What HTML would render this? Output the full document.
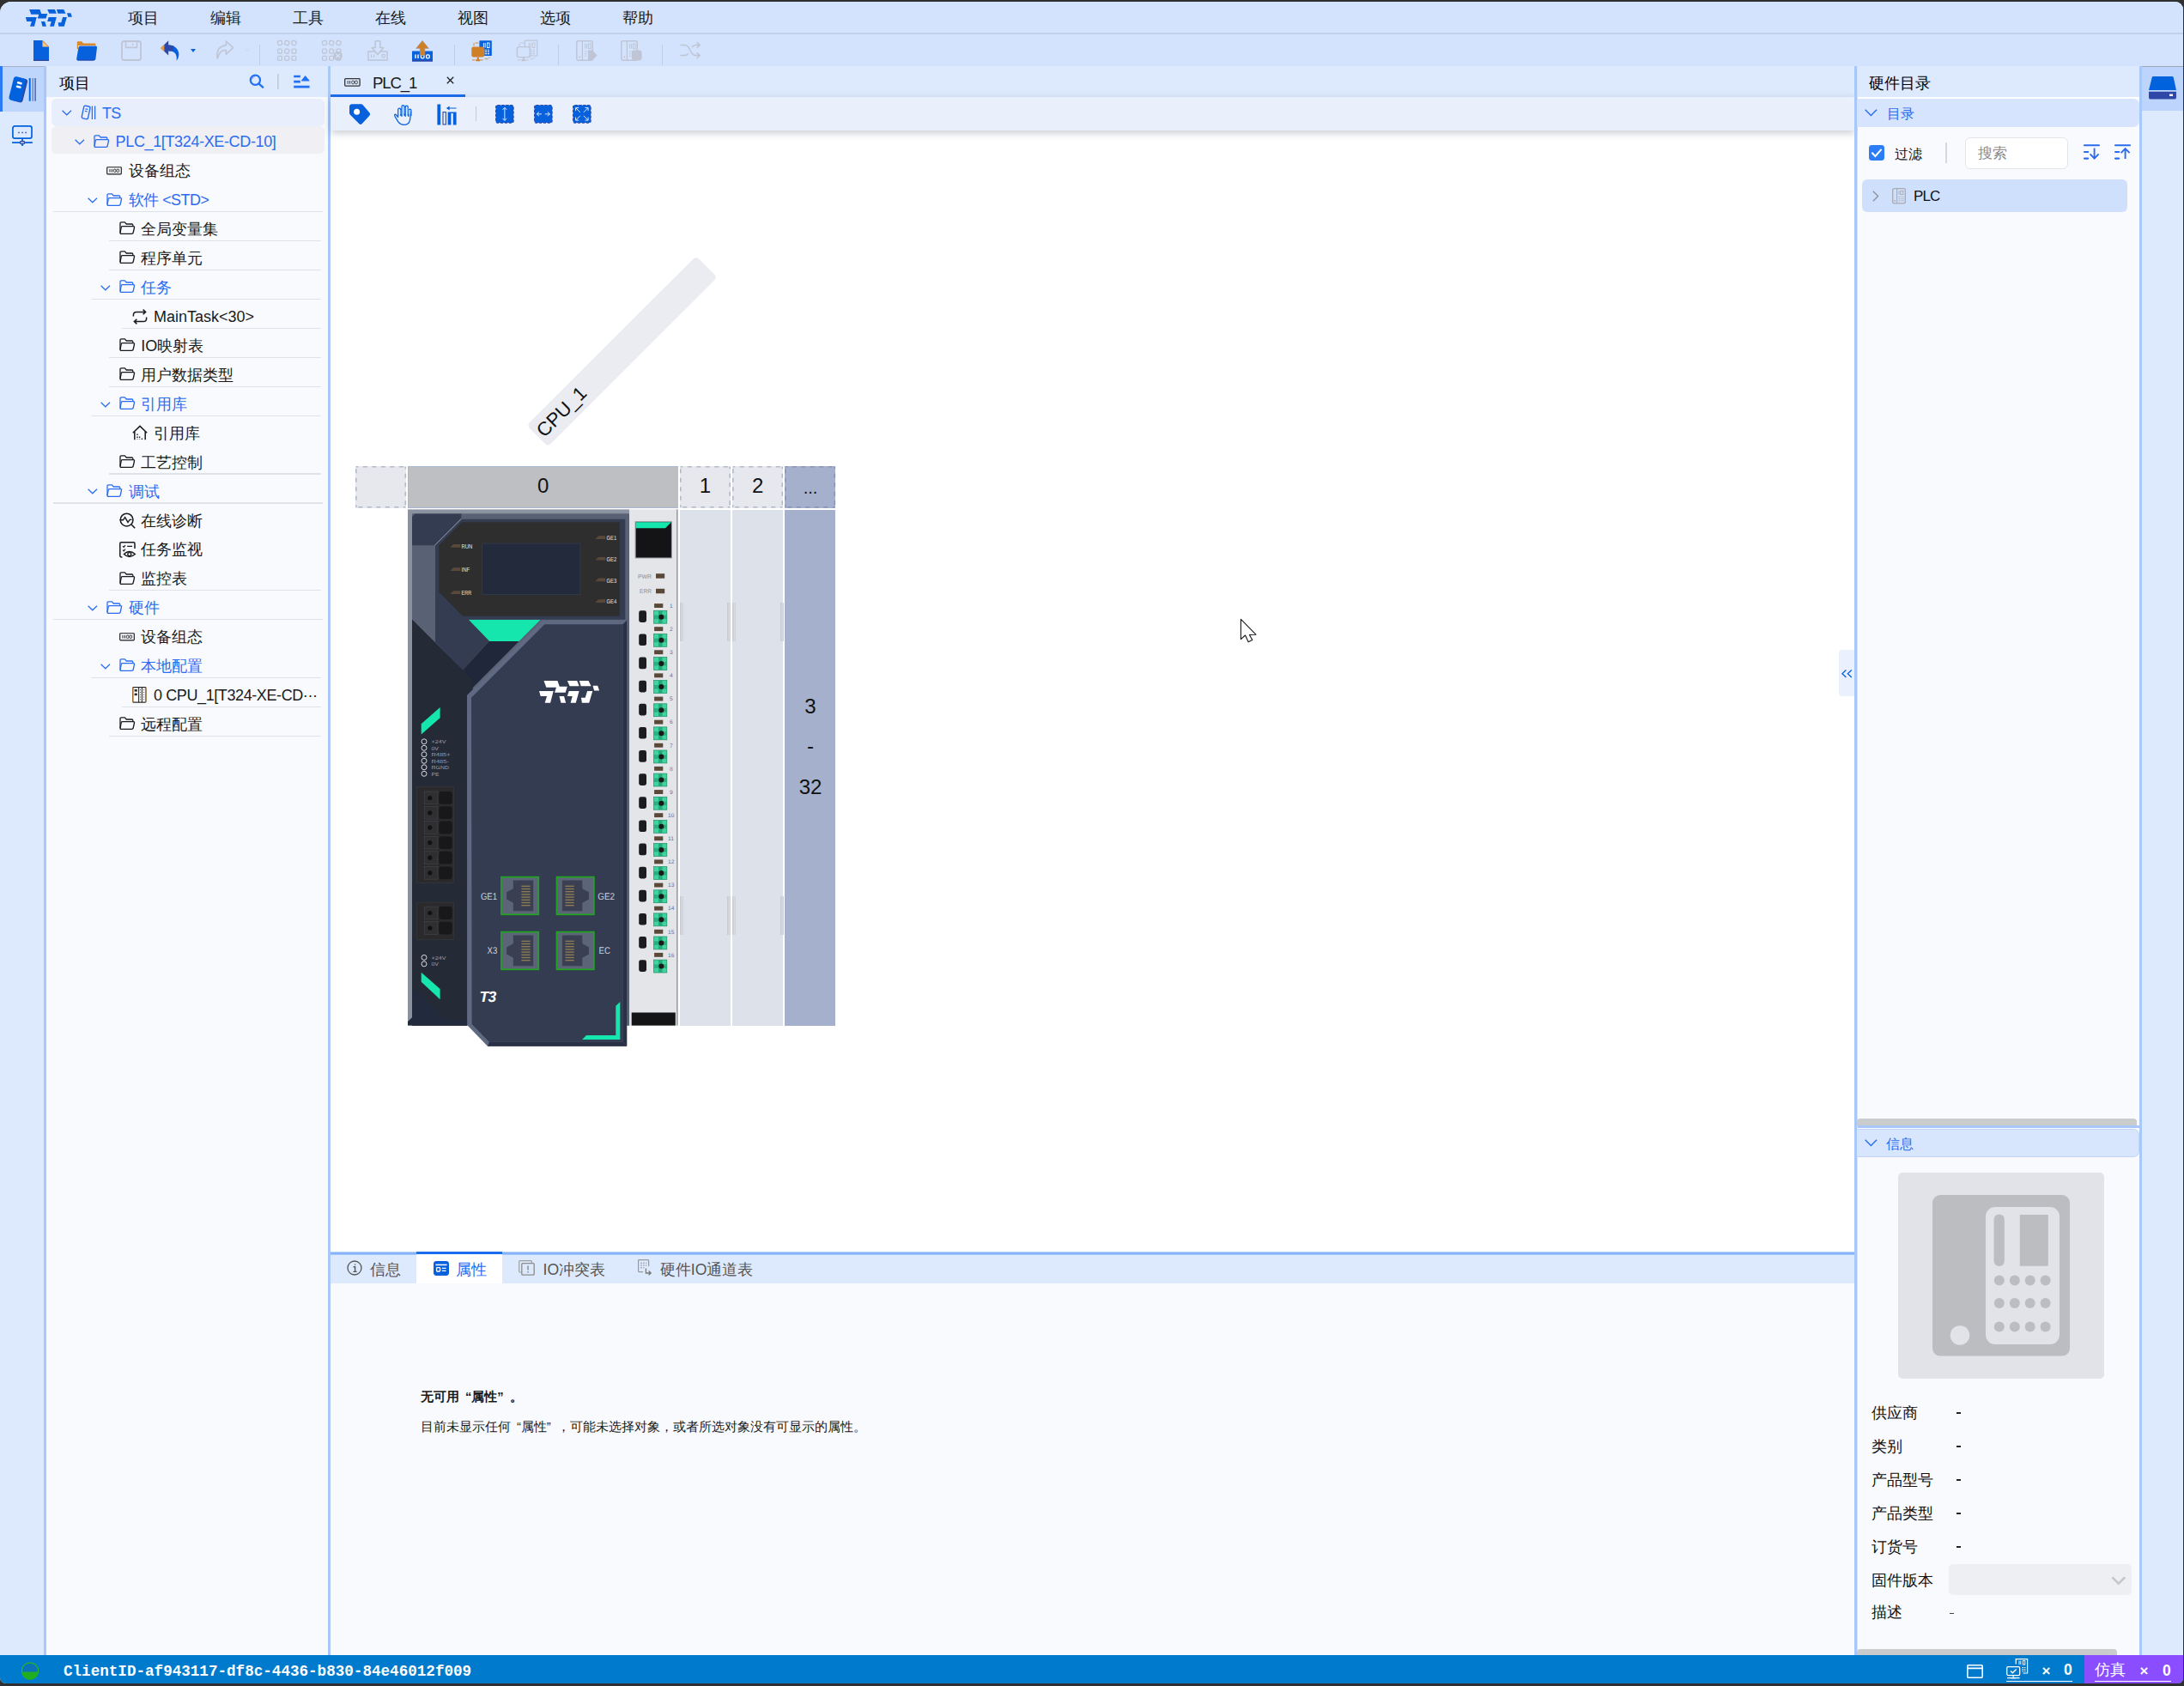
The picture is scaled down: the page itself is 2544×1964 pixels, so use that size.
<!DOCTYPE html>
<html lang="zh"><head><meta charset="utf-8"><title>PLC_1</title>
<style>
html,body{margin:0;padding:0}
body{width:2544px;height:1964px;position:relative;overflow:hidden;background:#303030;font-family:"Liberation Sans",sans-serif;}
#win{position:absolute;left:0;top:0;width:2544px;height:1964px;clip-path:inset(2px 1px 3px 0px round 13px 9px 6px 7px);background:#d3e3fd}
#win>div,#win>svg,.abs{position:absolute}
#win div{position:absolute;box-sizing:border-box}
#win svg{position:absolute;overflow:visible}
.t{white-space:nowrap}
</style></head>
<body><div id="win"><div style="left:0px;top:0px;width:2544px;height:39px;background:#d3e3fd"></div><div style="left:0px;top:38px;width:2544px;height:2px;background:#c2d0ea"></div><svg style="left:20px;top:4px;" width="80" height="34" viewBox="0 0 2184 928"><polygon points="385,190 720,190 770,330 960,330 915,480 650,480 690,350 445,350" fill="#0760dc"/><polygon points="270,440 620,440 545,730 410,730 460,570 305,570" fill="#0760dc"/><polygon points="765,570 880,570 925,730 805,730" fill="#0760dc"/><polygon points="960,190 1200,190 1250,320 1020,320" fill="#0760dc"/><polygon points="1255,190 1480,190 1545,320 1295,320" fill="#0760dc"/><polygon points="1585,310 1705,310 1745,430 1620,430" fill="#0760dc"/><polygon points="1000,440 1250,440 1170,730 1040,730 1085,570 960,570" fill="#0760dc"/><polygon points="1450,440 1580,440 1495,730 1320,730 1300,605 1400,605" fill="#0760dc"/></svg><div class="t" style="left:148.5px;top:10.4px;height:23px;line-height:23px;font-size:18px;color:#1a1a1a;">项目</div><div class="t" style="left:244.5px;top:10.4px;height:23px;line-height:23px;font-size:18px;color:#1a1a1a;">编辑</div><div class="t" style="left:340.5px;top:10.4px;height:23px;line-height:23px;font-size:18px;color:#1a1a1a;">工具</div><div class="t" style="left:436.5px;top:10.4px;height:23px;line-height:23px;font-size:18px;color:#1a1a1a;">在线</div><div class="t" style="left:532.5px;top:10.4px;height:23px;line-height:23px;font-size:18px;color:#1a1a1a;">视图</div><div class="t" style="left:628.5px;top:10.4px;height:23px;line-height:23px;font-size:18px;color:#1a1a1a;">选项</div><div class="t" style="left:724.5px;top:10.4px;height:23px;line-height:23px;font-size:18px;color:#1a1a1a;">帮助</div><div style="left:0px;top:40px;width:2544px;height:37px;background:#d3e3fd"></div><svg style="left:39px;top:47px;" width="18" height="24" viewBox="0 0 18 24"><path d="M0 0H10.5L18 7.5V24H0Z" fill="#0760dc"/><path d="M0 22.6H18V24H0Z" fill="#2f48a8"/><path d="M10.5 0L18 7.5H10.5Z" fill="#f6c98f"/><path d="M10.5 0L18 7.5H17L10.5 1.2Z" fill="#d9892b"/></svg><svg style="left:89px;top:48px;" width="24" height="23" viewBox="0 0 24 23"><path d="M0.8 1.2Q0.8 0.3 1.8 0.3H6.2L8.2 2.6H21.6Q22.4 2.6 22.4 3.4V9H0.8Z" fill="#d9892b"/><path d="M2 5H22V9H2Z" fill="#fff"/><path d="M2.6 6.6Q3 5.6 4.2 5.6H22.2Q24.3 5.6 24 7.6L22.4 20.4Q22.1 22.4 20 22.4H2Q-0.2 22.4 0.2 20.2Z" fill="#0760dc"/><path d="M0.3 20.6Q0.6 22.4 2 22.4H20Q22 22.4 22.3 20.6Q21.6 21.4 20 21.4H2.4Q1 21.4 0.3 20.6Z" fill="#2f48a8"/></svg><svg style="left:141px;top:47px;" width="24" height="24" viewBox="0 0 24 24"><rect x="1" y="1" width="22" height="22" rx="2.5" fill="none" stroke="#bfc5d4" stroke-width="1.8"/><path d="M5.5 1.2V8.4H18.5V1.2" fill="none" stroke="#bfc5d4" stroke-width="1.6"/><path d="M13.6 3.4V6" stroke="#bfc5d4" stroke-width="1.4"/></svg><svg style="left:187px;top:47px;" width="22" height="24" viewBox="0 0 22 24"><path d="M9 5.5Q19.5 5.5 21.3 15Q21.8 20 18.5 23.8Q19.5 18 16.5 14.6Q13.5 12 9 12.3Z" fill="#0760dc"/><path d="M9.2 0.3V17.6L0.3 9Z" fill="#2f48a8"/><path d="M9.2 5.2V12.4L14.6 12.6L15.4 6.4Z" fill="#2f48a8"/><path d="M0.3 9L4.4 5V13Z" fill="#e69b3c"/></svg><svg style="left:222px;top:57px;" width="6" height="4" viewBox="0 0 6 4"><path d="M0 0H6L3 4Z" fill="#0760dc"/></svg><svg style="left:251px;top:47px;" width="22" height="24" viewBox="0 0 22 24"><path d="M12.4 1L20.6 8.6L12.4 16.2V11.6Q4.6 11 2.4 21Q-0.4 8 12.4 5.6Z" fill="none" stroke="#bfc5d4" stroke-width="1.6" stroke-linejoin="round"/></svg><svg style="left:285px;top:57px;" width="6" height="4" viewBox="0 0 6 4"><path d="M0 0H6L3 4Z" fill="#cfdcf5"/></svg><div style="left:302px;top:52px;width:1.3px;height:24px;background:#c0cde8"></div><div style="left:528.5px;top:52px;width:1.3px;height:24px;background:#c0cde8"></div><div style="left:650px;top:52px;width:1.3px;height:24px;background:#c0cde8"></div><div style="left:771px;top:52px;width:1.3px;height:24px;background:#c0cde8"></div><svg style="left:323px;top:47px;" width="24" height="24" viewBox="0 0 24 24"><rect x="0.6" y="0.6" width="4.8" height="4.8" rx="1" transform="rotate(-12 3.0 3.0000000000000004)" fill="none" stroke="#bfc5d4" stroke-width="1.3"/><rect x="8.8" y="0.6" width="4.8" height="4.8" rx="1" transform="rotate(18 11.2 3.0000000000000004)" fill="none" stroke="#bfc5d4" stroke-width="1.3"/><rect x="17.0" y="0.6" width="4.8" height="4.8" rx="1" transform="rotate(20 19.4 3.0000000000000004)" fill="none" stroke="#bfc5d4" stroke-width="1.3"/><rect x="0.6" y="10.2" width="4.8" height="4.8" rx="1" fill="none" stroke="#bfc5d4" stroke-width="1.3"/><rect x="8.8" y="10.2" width="4.8" height="4.8" rx="1" transform="rotate(15 11.2 12.6)" fill="none" stroke="#bfc5d4" stroke-width="1.3"/><rect x="17.0" y="10.2" width="4.8" height="4.8" rx="1" fill="none" stroke="#bfc5d4" stroke-width="1.3"/><rect x="0.6" y="18.4" width="4.8" height="4.8" rx="1" fill="none" stroke="#bfc5d4" stroke-width="1.3"/><rect x="8.8" y="18.4" width="4.8" height="4.8" rx="1" fill="none" stroke="#bfc5d4" stroke-width="1.3"/><rect x="17.0" y="18.4" width="4.8" height="4.8" rx="1" fill="none" stroke="#bfc5d4" stroke-width="1.3"/></svg><svg style="left:375px;top:47px;" width="24" height="24" viewBox="0 0 24 24"><rect x="0.6" y="0.6" width="4.8" height="4.8" rx="1" transform="rotate(-12 3.0 3.0000000000000004)" fill="none" stroke="#bfc5d4" stroke-width="1.3"/><rect x="8.8" y="0.6" width="4.8" height="4.8" rx="1" transform="rotate(18 11.2 3.0000000000000004)" fill="none" stroke="#bfc5d4" stroke-width="1.3"/><rect x="17.0" y="0.6" width="4.8" height="4.8" rx="1" transform="rotate(20 19.4 3.0000000000000004)" fill="none" stroke="#bfc5d4" stroke-width="1.3"/><rect x="0.6" y="10.2" width="4.8" height="4.8" rx="1" fill="none" stroke="#bfc5d4" stroke-width="1.3"/><rect x="8.8" y="10.2" width="4.8" height="4.8" rx="1" transform="rotate(15 11.2 12.6)" fill="none" stroke="#bfc5d4" stroke-width="1.3"/><rect x="17.0" y="10.2" width="4.8" height="4.8" rx="1" fill="none" stroke="#bfc5d4" stroke-width="1.3"/><rect x="0.6" y="18.4" width="4.8" height="4.8" rx="1" fill="none" stroke="#bfc5d4" stroke-width="1.3"/><rect x="8.8" y="18.4" width="4.8" height="4.8" rx="1" fill="none" stroke="#bfc5d4" stroke-width="1.3"/><rect x="17.0" y="18.4" width="4.8" height="4.8" rx="1" fill="none" stroke="#bfc5d4" stroke-width="1.3"/><circle cx="18.6" cy="18" r="5.2" fill="#bfc5d4"/><path d="M16.2 15.6L21 20.4M21 15.6L16.2 20.4" stroke="#d3e3fd" stroke-width="1.3"/></svg><svg style="left:428px;top:47px;" width="24" height="24" viewBox="0 0 24 24"><path d="M1 13H23V23H1Z" fill="none" stroke="#bfc5d4" stroke-width="1.5"/><path d="M9.2 0.8H14.8V8.6H18.8L12 16.4L5.2 8.6H9.2Z" fill="#d3e3fd" stroke="#bfc5d4" stroke-width="1.5" stroke-linejoin="round"/><path d="M4.6 16.4V20M7.6 16.4V20" stroke="#bfc5d4" stroke-width="1.3"/><rect x="17" y="16.4" width="3.4" height="3.6" rx="1.2" fill="none" stroke="#bfc5d4" stroke-width="1.2"/></svg><svg style="left:480px;top:46.6px;" width="24" height="25" viewBox="0 0 24 25"><path d="M0 12.6H24V24.4H0Z" fill="#0760dc"/><path d="M0 22.8H24V24.4H0Z" fill="#2f48a8"/><path d="M4 16.6V21M7 16.6V21" stroke="#fff" stroke-width="1.4"/><rect x="10.4" y="16.8" width="3.6" height="4" rx="1.3" fill="none" stroke="#fff" stroke-width="1.3"/><rect x="16.6" y="16.8" width="3.6" height="4" rx="1.3" fill="none" stroke="#fff" stroke-width="1.3"/><path d="M12 0.3L19.6 9.4H14.9V17.6H9.1V9.4H4.4Z" fill="#cf7f26" stroke="#9aa0b4" stroke-width="0.5"/></svg><svg style="left:549px;top:47px;" width="24" height="24" viewBox="0 0 24 24"><rect x="9.4" y="0.2" width="14.4" height="17.8" rx="0.6" fill="#0760dc"/><path d="M14.4 3V8.6M16.2 3V8.6" stroke="#fff" stroke-width="0.9"/><rect x="18.4" y="3" width="2.6" height="5.6" fill="none" stroke="#fff" stroke-width="0.9"/><path d="M13.6 11.2H21.4M13.6 13.4H21.4M13.6 15.6H21.4" stroke="#fff" stroke-width="1.1" stroke-dasharray="1.8 0.9"/><path d="M8.6 3H4.2Q3 3 3 4.2V6.6" fill="none" stroke="#cf7f26" stroke-width="1.5" stroke-dasharray="4 1" opacity="0.6"/><path d="M15.6 21.4H19.4Q20.8 21.4 20.8 19.6" fill="none" stroke="#cf7f26" stroke-width="1.5" stroke-dasharray="4 1" opacity="0.6"/><rect x="0.3" y="7.6" width="15" height="12" rx="2.4" fill="#cf7f26" stroke="#cf7f26" stroke-width="0"/><path d="M7.8 19.6V23.2M5.4 23.2H10.2" stroke="#cf7f26" stroke-width="2"/><path d="M1 22.9H14.6" stroke="#cf7f26" stroke-width="0.9" stroke-dasharray="3.4 1.2"/></svg><svg style="left:602px;top:47px;" width="24" height="24" viewBox="0 0 24 24"><rect x="9.4" y="0.2" width="14.4" height="17.8" rx="0.6" fill="none" stroke="#bfc5d4" stroke-width="1.2"/><path d="M14.4 3V8.6M16.2 3V8.6" stroke="#bfc5d4" stroke-width="0.9"/><rect x="18.4" y="3" width="2.6" height="5.6" fill="none" stroke="#bfc5d4" stroke-width="0.9"/><path d="M13.6 11.2H21.4M13.6 13.4H21.4M13.6 15.6H21.4" stroke="#bfc5d4" stroke-width="1.1" stroke-dasharray="1.8 0.9"/><path d="M8.6 3H4.2Q3 3 3 4.2V6.6" fill="none" stroke="#bfc5d4" stroke-width="1.5" stroke-dasharray="4 1" opacity="0.6"/><path d="M15.6 21.4H19.4Q20.8 21.4 20.8 19.6" fill="none" stroke="#bfc5d4" stroke-width="1.5" stroke-dasharray="4 1" opacity="0.6"/><rect x="0.3" y="7.6" width="15" height="12" rx="2.4" fill="#d3e3fd" stroke="#bfc5d4" stroke-width="1.4"/><path d="M7.8 19.6V23.2M5.4 23.2H10.2" stroke="#bfc5d4" stroke-width="2"/><path d="M1 22.9H14.6" stroke="#bfc5d4" stroke-width="0.9" stroke-dasharray="3.4 1.2"/></svg><svg style="left:671px;top:47px;" width="25" height="24" viewBox="0 0 25 24"><rect x="0.8" y="0.8" width="18.4" height="22.4" rx="1.4" fill="none" stroke="#bfc5d4" stroke-width="1.5"/><path d="M7.4 1V23" stroke="#bfc5d4" stroke-width="1.3"/><path d="M10.6 4V9.6M12.6 4V9.6" stroke="#bfc5d4" stroke-width="1"/><rect x="14.6" y="4" width="2.4" height="5.6" fill="none" stroke="#bfc5d4" stroke-width="1"/><path d="M10 13H17M10 15.6H13M10 18.2H13" stroke="#bfc5d4" stroke-width="1.1" stroke-dasharray="1.6 0.9"/><circle cx="4.2" cy="19.4" r="1" fill="#bfc5d4"/><path d="M14 11.6H19L24.6 17.6L19 23.6H14Z" fill="#bfc5d4"/></svg><svg style="left:723px;top:47px;" width="25" height="24" viewBox="0 0 25 24"><rect x="0.8" y="0.8" width="18.4" height="22.4" rx="1.4" fill="none" stroke="#bfc5d4" stroke-width="1.5"/><path d="M7.4 1V23" stroke="#bfc5d4" stroke-width="1.3"/><path d="M10.6 4V9.6M12.6 4V9.6" stroke="#bfc5d4" stroke-width="1"/><rect x="14.6" y="4" width="2.4" height="5.6" fill="none" stroke="#bfc5d4" stroke-width="1"/><path d="M10 13H17M10 15.6H13M10 18.2H13" stroke="#bfc5d4" stroke-width="1.1" stroke-dasharray="1.6 0.9"/><circle cx="4.2" cy="19.4" r="1" fill="#bfc5d4"/><rect x="13" y="11.6" width="11.6" height="12" rx="3" fill="#bfc5d4"/></svg><svg style="left:792px;top:48px;" width="24" height="22" viewBox="0 0 24 22"><path d="M0.5 4.6H5.6Q8.4 4.6 10 7L14 14Q15.6 16.6 18.4 16.6H23M0.5 16.6H5.6Q8.4 16.6 10 14.2M14 7Q15.6 4.6 18.4 4.6H23M19.6 1.2L23.2 4.6L19.6 8M19.6 13.2L23.2 16.6L19.6 20" fill="none" stroke="#bfc5d4" stroke-width="1.5"/></svg><div style="left:0px;top:77px;width:51px;height:1851px;background:#dde9fd"></div><div style="left:0px;top:77px;width:51px;height:52.6px;background:#bfd6fc"></div><div style="left:2.8px;top:77px;width:48.2px;height:1.2px;background:#a7afc4"></div><div style="left:0px;top:77px;width:2.8px;height:52.6px;background:#2b7bf7"></div><svg style="left:11px;top:87px;" width="33" height="34" viewBox="0 0 33 34"><g transform="rotate(14 9.5 17)"><rect x="3.6" y="3.2" width="15" height="28" rx="3" fill="#2f48a8"/><rect x="2" y="3" width="14.6" height="28" rx="3" fill="#0062dc"/><rect x="7" y="8.2" width="6" height="2.4" rx="1" fill="#fff"/><rect x="7" y="12.8" width="6" height="2.4" rx="1" fill="#fff"/></g><path d="M23.7 4V30.8" stroke="#0062dc" stroke-width="1.9"/><path d="M27.2 4V30.8" stroke="#6f8fc8" stroke-width="1.6"/><path d="M30.1 4V30.8" stroke="#3c5cb0" stroke-width="1.4"/></svg><svg style="left:14px;top:145.8px;" width="24" height="25" viewBox="0 0 24 25"><rect x="0.9" y="0.85" width="22.1" height="14.35" rx="2.4" fill="none" stroke="#0062dc" stroke-width="1.7"/><rect x="7.2" y="7.7" width="1.5" height="1.5" fill="#2f48a8"/><rect x="11.3" y="7.7" width="1.5" height="1.5" fill="#2f48a8"/><rect x="15.4" y="7.7" width="1.5" height="1.5" fill="#2f48a8"/><path d="M12 16V24.1M0.06 20.1H23.9" stroke="#0062dc" stroke-width="1.8"/><rect x="9.5" y="18.7" width="5" height="2.9" rx="0.8" fill="#aebfe0" stroke="#2f48a8" stroke-width="1.2"/></svg><div style="left:51px;top:77px;width:3px;height:1851px;background:#a8c7fa"></div><div style="left:2492px;top:77px;width:3px;height:1851px;background:#a8c7fa"></div><div style="left:2495px;top:77px;width:49px;height:1851px;background:#dde9fd"></div><div style="left:2495px;top:77px;width:49px;height:52px;background:#bdd4fc"></div><div style="left:2495px;top:77px;width:49px;height:1px;background:#9ea7b8"></div><svg style="left:2503px;top:89px;" width="32" height="27" viewBox="0 0 32 27"><path d="M5.2 0H27.2Q28.4 0 28.8 1.4L32 15.9H0L3.6 1.4Q4 0 5.2 0Z" fill="#0062dc"/><path d="M0 17.7H32V24.4Q32 26.6 29.8 26.6H2.2Q0 26.6 0 24.4Z" fill="#2f48a8"/><rect x="24" y="20.6" width="4" height="2.4" fill="#fff"/></svg><div style="left:54px;top:77px;width:328px;height:1851px;background:#f8fafd"></div><div style="left:54px;top:77px;width:328px;height:36px;background:#dde9fd"></div><div class="t" style="left:69px;top:85.9px;height:23px;line-height:23px;font-size:18px;color:#000;">项目</div><svg style="left:290px;top:85.6px;" width="18" height="17" viewBox="0 0 18 17"><circle cx="7.4" cy="7.3" r="5.6" fill="none" stroke="#2171f3" stroke-width="2.2"/><path d="M11.6 11.6L16.2 15.6" stroke="#2171f3" stroke-width="2.4" stroke-linecap="round"/><path d="M3.6 6.6Q4.2 3.8 7 3.4" fill="none" stroke="#5b3fd0" stroke-width="0.8" opacity="0.6"/></svg><div style="left:323.2px;top:86.2px;width:2.2px;height:17.6px;background:linear-gradient(90deg,#bcc4d4,#d3dae8)"></div><svg style="left:342px;top:87.3px;" width="19" height="16" viewBox="0 0 19 16"><path d="M0.2 2H7.9M0.2 8.1H7.9M0.2 14.1H18.6" stroke="#2171f3" stroke-width="2.6"/><path d="M13.6 1L18.3 6.4Q18.9 7.4 17.8 7.4H9.6Q8.5 7.4 9.1 6.4Z" fill="#2171f3"/></svg><div style="left:382.3px;top:77px;width:3px;height:1851px;background:#a8c7fa"></div><div style="left:60px;top:114.5px;width:318px;height:32px;background:#e8eefb;border-radius:6px"></div><svg style="left:72px;top:128.35px;" width="12" height="8" viewBox="0 0 12 8"><path d="M0.6 0.8L5.8 5.8L11 0.8" fill="none" stroke="#2a6cf0" stroke-width="1.2"/></svg><svg style="left:95px;top:122.15px;" width="17" height="18" viewBox="0 0 17 18"><g transform="rotate(12 5 9)"><rect x="1.4" y="1.4" width="7.4" height="15" rx="1.8" fill="none" stroke="#2a6cf0" stroke-width="1.4"/><path d="M3.6 5H6.6M3.6 7.6H6.6" stroke="#2a6cf0" stroke-width="1.2"/></g><path d="M12.4 1.6V17M15.6 1.6V17" stroke="#2a6cf0" stroke-width="1.3"/></svg><div class="t" style="left:119px;top:120.5px;height:23px;line-height:23px;font-size:18px;color:#2a6cf0;letter-spacing:-0.8px;">TS</div><div style="left:60px;top:147.4px;width:318px;height:32.1px;background:#efeff4;border-radius:6px"></div><svg style="left:87px;top:162.28px;" width="12" height="8" viewBox="0 0 12 8"><path d="M0.6 0.8L5.8 5.8L11 0.8" fill="none" stroke="#2a6cf0" stroke-width="1.2"/></svg><svg style="left:109px;top:156.68px;" width="18" height="16" viewBox="0 0 18 16"><path d="M1 13.2V2.2Q1 0.9 2.3 0.9H6.4L8.2 3H14.6Q15.8 3 15.8 4.2V5.6" fill="none" stroke="#2a6cf0" stroke-width="1.3" stroke-linejoin="round"/><path d="M3.4 5.7H16.4Q17.8 5.7 17.5 7L16.2 13Q15.9 14.3 14.5 14.3H2.2Q0.8 14.3 1.1 13L2.2 6.9Q2.4 5.7 3.4 5.7Z" fill="none" stroke="#2a6cf0" stroke-width="1.3" stroke-linejoin="round"/></svg><div class="t" style="left:134.6px;top:154.4px;height:23px;line-height:23px;font-size:18px;color:#2a6cf0;letter-spacing:-0.36px;">PLC_1[T324-XE-CD-10]</div><svg style="left:124px;top:193.81000000000003px;" width="18" height="10" viewBox="0 0 18 10"><rect x="0.7" y="0.7" width="16.6" height="8.2" rx="0.8" fill="none" stroke="#1a1a1a" stroke-width="1.15"/><path d="M4 3V6.6M6.4 3V6.6" stroke="#1a1a1a" stroke-width="1"/><rect x="8.4" y="3.1" width="2.6" height="3.4" rx="1" fill="none" stroke="#1a1a1a" stroke-width="0.9"/><rect x="12" y="3.1" width="2.6" height="3.4" rx="1" fill="none" stroke="#1a1a1a" stroke-width="0.9"/></svg><div class="t" style="left:150px;top:188.3px;height:23px;line-height:23px;font-size:18px;color:#1a1a1a;">设备组态</div><svg style="left:101.6px;top:230.14px;" width="12" height="8" viewBox="0 0 12 8"><path d="M0.6 0.8L5.8 5.8L11 0.8" fill="none" stroke="#2a6cf0" stroke-width="1.2"/></svg><svg style="left:124px;top:224.54px;" width="18" height="16" viewBox="0 0 18 16"><path d="M1 13.2V2.2Q1 0.9 2.3 0.9H6.4L8.2 3H14.6Q15.8 3 15.8 4.2V5.6" fill="none" stroke="#2a6cf0" stroke-width="1.3" stroke-linejoin="round"/><path d="M3.4 5.7H16.4Q17.8 5.7 17.5 7L16.2 13Q15.9 14.3 14.5 14.3H2.2Q0.8 14.3 1.1 13L2.2 6.9Q2.4 5.7 3.4 5.7Z" fill="none" stroke="#2a6cf0" stroke-width="1.3" stroke-linejoin="round"/></svg><div class="t" style="left:150px;top:222.2px;height:23px;line-height:23px;font-size:18px;color:#2a6cf0;letter-spacing:-0.6px;">软件 &lt;STD&gt;</div><div style="left:62px;top:246.09px;width:314px;height:1.2px;background:#dfe2e8"></div><svg style="left:138.6px;top:258.47px;" width="18" height="16" viewBox="0 0 18 16"><path d="M1 13.2V2.2Q1 0.9 2.3 0.9H6.4L8.2 3H14.6Q15.8 3 15.8 4.2V5.6" fill="none" stroke="#1a1a1a" stroke-width="1.3" stroke-linejoin="round"/><path d="M3.4 5.7H16.4Q17.8 5.7 17.5 7L16.2 13Q15.9 14.3 14.5 14.3H2.2Q0.8 14.3 1.1 13L2.2 6.9Q2.4 5.7 3.4 5.7Z" fill="none" stroke="#1a1a1a" stroke-width="1.3" stroke-linejoin="round"/></svg><div class="t" style="left:164.3px;top:256.2px;height:23px;line-height:23px;font-size:18px;color:#1a1a1a;">全局变量集</div><div style="left:127px;top:280.02000000000004px;width:246.60000000000002px;height:1.2px;background:#dfe2e8"></div><svg style="left:138.6px;top:292.4px;" width="18" height="16" viewBox="0 0 18 16"><path d="M1 13.2V2.2Q1 0.9 2.3 0.9H6.4L8.2 3H14.6Q15.8 3 15.8 4.2V5.6" fill="none" stroke="#1a1a1a" stroke-width="1.3" stroke-linejoin="round"/><path d="M3.4 5.7H16.4Q17.8 5.7 17.5 7L16.2 13Q15.9 14.3 14.5 14.3H2.2Q0.8 14.3 1.1 13L2.2 6.9Q2.4 5.7 3.4 5.7Z" fill="none" stroke="#1a1a1a" stroke-width="1.3" stroke-linejoin="round"/></svg><div class="t" style="left:164.3px;top:290.1px;height:23px;line-height:23px;font-size:18px;color:#1a1a1a;">程序单元</div><div style="left:127px;top:313.95px;width:246.60000000000002px;height:1.2px;background:#dfe2e8"></div><svg style="left:117px;top:331.93px;" width="12" height="8" viewBox="0 0 12 8"><path d="M0.6 0.8L5.8 5.8L11 0.8" fill="none" stroke="#2a6cf0" stroke-width="1.2"/></svg><svg style="left:138.6px;top:326.33px;" width="18" height="16" viewBox="0 0 18 16"><path d="M1 13.2V2.2Q1 0.9 2.3 0.9H6.4L8.2 3H14.6Q15.8 3 15.8 4.2V5.6" fill="none" stroke="#2a6cf0" stroke-width="1.3" stroke-linejoin="round"/><path d="M3.4 5.7H16.4Q17.8 5.7 17.5 7L16.2 13Q15.9 14.3 14.5 14.3H2.2Q0.8 14.3 1.1 13L2.2 6.9Q2.4 5.7 3.4 5.7Z" fill="none" stroke="#2a6cf0" stroke-width="1.3" stroke-linejoin="round"/></svg><div class="t" style="left:164.3px;top:324.0px;height:23px;line-height:23px;font-size:18px;color:#2a6cf0;">任务</div><div style="left:106px;top:347.88px;width:267.6px;height:1.2px;background:#dfe2e8"></div><svg style="left:154px;top:359.65999999999997px;" width="18" height="18" viewBox="0 0 18 18"><path d="M1.4 8.4V7Q1.4 3.4 5 3.4H15.4M12.6 0.6L15.6 3.4L12.6 6.2" fill="none" stroke="#1a1a1a" stroke-width="1.5"/><path d="M16.6 9.4V11Q16.6 14.6 13 14.6H2.6M5.4 11.8L2.4 14.6L5.4 17.4" fill="none" stroke="#1a1a1a" stroke-width="1.5"/></svg><div class="t" style="left:179px;top:358.0px;height:23px;line-height:23px;font-size:18px;color:#1a1a1a;">MainTask&lt;30&gt;</div><div style="left:142px;top:381.81px;width:231.60000000000002px;height:1.2px;background:#dfe2e8"></div><svg style="left:138.6px;top:394.19px;" width="18" height="16" viewBox="0 0 18 16"><path d="M1 13.2V2.2Q1 0.9 2.3 0.9H6.4L8.2 3H14.6Q15.8 3 15.8 4.2V5.6" fill="none" stroke="#1a1a1a" stroke-width="1.3" stroke-linejoin="round"/><path d="M3.4 5.7H16.4Q17.8 5.7 17.5 7L16.2 13Q15.9 14.3 14.5 14.3H2.2Q0.8 14.3 1.1 13L2.2 6.9Q2.4 5.7 3.4 5.7Z" fill="none" stroke="#1a1a1a" stroke-width="1.3" stroke-linejoin="round"/></svg><div class="t" style="left:164.3px;top:391.9px;height:23px;line-height:23px;font-size:18px;color:#1a1a1a;">IO映射表</div><div style="left:127px;top:415.74px;width:246.60000000000002px;height:1.2px;background:#dfe2e8"></div><svg style="left:138.6px;top:428.12px;" width="18" height="16" viewBox="0 0 18 16"><path d="M1 13.2V2.2Q1 0.9 2.3 0.9H6.4L8.2 3H14.6Q15.8 3 15.8 4.2V5.6" fill="none" stroke="#1a1a1a" stroke-width="1.3" stroke-linejoin="round"/><path d="M3.4 5.7H16.4Q17.8 5.7 17.5 7L16.2 13Q15.9 14.3 14.5 14.3H2.2Q0.8 14.3 1.1 13L2.2 6.9Q2.4 5.7 3.4 5.7Z" fill="none" stroke="#1a1a1a" stroke-width="1.3" stroke-linejoin="round"/></svg><div class="t" style="left:164.3px;top:425.8px;height:23px;line-height:23px;font-size:18px;color:#1a1a1a;">用户数据类型</div><div style="left:127px;top:449.67px;width:246.60000000000002px;height:1.2px;background:#dfe2e8"></div><svg style="left:117px;top:467.65000000000003px;" width="12" height="8" viewBox="0 0 12 8"><path d="M0.6 0.8L5.8 5.8L11 0.8" fill="none" stroke="#2a6cf0" stroke-width="1.2"/></svg><svg style="left:138.6px;top:462.05px;" width="18" height="16" viewBox="0 0 18 16"><path d="M1 13.2V2.2Q1 0.9 2.3 0.9H6.4L8.2 3H14.6Q15.8 3 15.8 4.2V5.6" fill="none" stroke="#2a6cf0" stroke-width="1.3" stroke-linejoin="round"/><path d="M3.4 5.7H16.4Q17.8 5.7 17.5 7L16.2 13Q15.9 14.3 14.5 14.3H2.2Q0.8 14.3 1.1 13L2.2 6.9Q2.4 5.7 3.4 5.7Z" fill="none" stroke="#2a6cf0" stroke-width="1.3" stroke-linejoin="round"/></svg><div class="t" style="left:164.3px;top:459.8px;height:23px;line-height:23px;font-size:18px;color:#2a6cf0;">引用库</div><div style="left:106px;top:483.6px;width:267.6px;height:1.2px;background:#dfe2e8"></div><svg style="left:154px;top:495.38px;" width="18" height="18" viewBox="0 0 18 18"><path d="M0.8 9.2L9 1.4L17.2 9.2M2.8 7.6V17.2M15.2 7.6V17.2" fill="none" stroke="#1a1a1a" stroke-width="1.5"/><path d="M6 10.4V17" stroke="#1a1a1a" stroke-width="1.4" stroke-dasharray="1.6 1.4"/><path d="M8.6 13.4V17" stroke="#1a1a1a" stroke-width="1.4" stroke-dasharray="1.6 1.4"/><path d="M11.4 15.6V17" stroke="#1a1a1a" stroke-width="1.4"/></svg><div class="t" style="left:179px;top:493.7px;height:23px;line-height:23px;font-size:18px;color:#1a1a1a;">引用库</div><svg style="left:138.6px;top:529.91px;" width="18" height="16" viewBox="0 0 18 16"><path d="M1 13.2V2.2Q1 0.9 2.3 0.9H6.4L8.2 3H14.6Q15.8 3 15.8 4.2V5.6" fill="none" stroke="#1a1a1a" stroke-width="1.3" stroke-linejoin="round"/><path d="M3.4 5.7H16.4Q17.8 5.7 17.5 7L16.2 13Q15.9 14.3 14.5 14.3H2.2Q0.8 14.3 1.1 13L2.2 6.9Q2.4 5.7 3.4 5.7Z" fill="none" stroke="#1a1a1a" stroke-width="1.3" stroke-linejoin="round"/></svg><div class="t" style="left:164.3px;top:527.6px;height:23px;line-height:23px;font-size:18px;color:#1a1a1a;">工艺控制</div><div style="left:127px;top:551.4599999999999px;width:246.60000000000002px;height:1.2px;background:#dfe2e8"></div><svg style="left:101.6px;top:569.4399999999999px;" width="12" height="8" viewBox="0 0 12 8"><path d="M0.6 0.8L5.8 5.8L11 0.8" fill="none" stroke="#2a6cf0" stroke-width="1.2"/></svg><svg style="left:124px;top:563.8399999999999px;" width="18" height="16" viewBox="0 0 18 16"><path d="M1 13.2V2.2Q1 0.9 2.3 0.9H6.4L8.2 3H14.6Q15.8 3 15.8 4.2V5.6" fill="none" stroke="#2a6cf0" stroke-width="1.3" stroke-linejoin="round"/><path d="M3.4 5.7H16.4Q17.8 5.7 17.5 7L16.2 13Q15.9 14.3 14.5 14.3H2.2Q0.8 14.3 1.1 13L2.2 6.9Q2.4 5.7 3.4 5.7Z" fill="none" stroke="#2a6cf0" stroke-width="1.3" stroke-linejoin="round"/></svg><div class="t" style="left:150px;top:561.5px;height:23px;line-height:23px;font-size:18px;color:#2a6cf0;">调试</div><div style="left:62px;top:585.3899999999999px;width:314px;height:1.2px;background:#dfe2e8"></div><svg style="left:138.6px;top:597.17px;" width="19" height="19" viewBox="0 0 19 19"><circle cx="8.6" cy="8.6" r="7.4" fill="none" stroke="#1a1a1a" stroke-width="1.5"/><path d="M14 14L18.2 18.2" stroke="#1a1a1a" stroke-width="1.6"/><path d="M0.6 8.8H4.4L6.6 5.6L10 11.4L12.2 8.4H14.6" fill="none" stroke="#1a1a1a" stroke-width="1.4"/></svg><div class="t" style="left:164.3px;top:595.5px;height:23px;line-height:23px;font-size:18px;color:#1a1a1a;">在线诊断</div><svg style="left:138.6px;top:630.7px;" width="19" height="19" viewBox="0 0 19 19"><path d="M18 8V2.2Q18 0.8 16.6 0.8H2.2Q0.8 0.8 0.8 2.2V16.6Q0.8 18 2.2 18H3.4" fill="none" stroke="#1a1a1a" stroke-width="1.5"/><path d="M4 5.2L5.2 6.4L7 4.2M9.2 5.4H15M4 9.6L5.2 10.8L7 8.6" fill="none" stroke="#1a1a1a" stroke-width="1.2"/><path d="M5.4 14.6Q11.6 8.4 18.4 14.6Q11.6 20.6 5.4 14.6Z" fill="none" stroke="#1a1a1a" stroke-width="1.4"/><circle cx="11.8" cy="14.6" r="2" fill="none" stroke="#1a1a1a" stroke-width="1.3"/></svg><div class="t" style="left:164.3px;top:629.4px;height:23px;line-height:23px;font-size:18px;color:#1a1a1a;">任务监视</div><svg style="left:138.6px;top:665.63px;" width="18" height="16" viewBox="0 0 18 16"><path d="M1 13.2V2.2Q1 0.9 2.3 0.9H6.4L8.2 3H14.6Q15.8 3 15.8 4.2V5.6" fill="none" stroke="#1a1a1a" stroke-width="1.3" stroke-linejoin="round"/><path d="M3.4 5.7H16.4Q17.8 5.7 17.5 7L16.2 13Q15.9 14.3 14.5 14.3H2.2Q0.8 14.3 1.1 13L2.2 6.9Q2.4 5.7 3.4 5.7Z" fill="none" stroke="#1a1a1a" stroke-width="1.3" stroke-linejoin="round"/></svg><div class="t" style="left:164.3px;top:663.3px;height:23px;line-height:23px;font-size:18px;color:#1a1a1a;">监控表</div><div style="left:127px;top:687.18px;width:246.60000000000002px;height:1.2px;background:#dfe2e8"></div><svg style="left:101.6px;top:705.16px;" width="12" height="8" viewBox="0 0 12 8"><path d="M0.6 0.8L5.8 5.8L11 0.8" fill="none" stroke="#2a6cf0" stroke-width="1.2"/></svg><svg style="left:124px;top:699.56px;" width="18" height="16" viewBox="0 0 18 16"><path d="M1 13.2V2.2Q1 0.9 2.3 0.9H6.4L8.2 3H14.6Q15.8 3 15.8 4.2V5.6" fill="none" stroke="#2a6cf0" stroke-width="1.3" stroke-linejoin="round"/><path d="M3.4 5.7H16.4Q17.8 5.7 17.5 7L16.2 13Q15.9 14.3 14.5 14.3H2.2Q0.8 14.3 1.1 13L2.2 6.9Q2.4 5.7 3.4 5.7Z" fill="none" stroke="#2a6cf0" stroke-width="1.3" stroke-linejoin="round"/></svg><div class="t" style="left:150px;top:697.3px;height:23px;line-height:23px;font-size:18px;color:#2a6cf0;">硬件</div><div style="left:62px;top:721.1099999999999px;width:314px;height:1.2px;background:#dfe2e8"></div><svg style="left:138.6px;top:736.6899999999999px;" width="18" height="10" viewBox="0 0 18 10"><rect x="0.7" y="0.7" width="16.6" height="8.2" rx="0.8" fill="none" stroke="#1a1a1a" stroke-width="1.15"/><path d="M4 3V6.6M6.4 3V6.6" stroke="#1a1a1a" stroke-width="1"/><rect x="8.4" y="3.1" width="2.6" height="3.4" rx="1" fill="none" stroke="#1a1a1a" stroke-width="0.9"/><rect x="12" y="3.1" width="2.6" height="3.4" rx="1" fill="none" stroke="#1a1a1a" stroke-width="0.9"/></svg><div class="t" style="left:164.3px;top:731.2px;height:23px;line-height:23px;font-size:18px;color:#1a1a1a;">设备组态</div><svg style="left:117px;top:773.02px;" width="12" height="8" viewBox="0 0 12 8"><path d="M0.6 0.8L5.8 5.8L11 0.8" fill="none" stroke="#2a6cf0" stroke-width="1.2"/></svg><svg style="left:138.6px;top:767.42px;" width="18" height="16" viewBox="0 0 18 16"><path d="M1 13.2V2.2Q1 0.9 2.3 0.9H6.4L8.2 3H14.6Q15.8 3 15.8 4.2V5.6" fill="none" stroke="#2a6cf0" stroke-width="1.3" stroke-linejoin="round"/><path d="M3.4 5.7H16.4Q17.8 5.7 17.5 7L16.2 13Q15.9 14.3 14.5 14.3H2.2Q0.8 14.3 1.1 13L2.2 6.9Q2.4 5.7 3.4 5.7Z" fill="none" stroke="#2a6cf0" stroke-width="1.3" stroke-linejoin="round"/></svg><div class="t" style="left:164.3px;top:765.1px;height:23px;line-height:23px;font-size:18px;color:#2a6cf0;">本地配置</div><div style="left:106px;top:788.9699999999999px;width:267.6px;height:1.2px;background:#dfe2e8"></div><svg style="left:154px;top:800.15px;" width="17" height="19" viewBox="0 0 17 19"><rect x="0.7" y="0.7" width="15.2" height="17.4" rx="0.8" fill="#fff" stroke="#2a2a2a" stroke-width="1.3"/><path d="M0.8 1V18" stroke="#e08a2c" stroke-width="0.9"/><path d="M15.9 1V18" stroke="#e08a2c" stroke-width="0.9"/><path d="M7.6 1V18M11.4 1V18" stroke="#2a2a2a" stroke-width="1.1"/><rect x="2.6" y="3" width="3.2" height="2.6" fill="#2a2a2a"/><rect x="2.6" y="7.6" width="3.2" height="2.6" fill="#2a2a2a"/><path d="M9.5 3V16M13.6 3V16" stroke="#555" stroke-width="1" stroke-dasharray="1.2 1.6"/></svg><div class="t" style="left:179px;top:799.0px;height:23px;line-height:23px;font-size:18px;color:#1a1a1a;letter-spacing:-0.4px;">0 CPU_1[T324-XE-CD···</div><div style="left:142px;top:822.9px;width:231.60000000000002px;height:1.2px;background:#dfe2e8"></div><svg style="left:138.6px;top:835.28px;" width="18" height="16" viewBox="0 0 18 16"><path d="M1 13.2V2.2Q1 0.9 2.3 0.9H6.4L8.2 3H14.6Q15.8 3 15.8 4.2V5.6" fill="none" stroke="#1a1a1a" stroke-width="1.3" stroke-linejoin="round"/><path d="M3.4 5.7H16.4Q17.8 5.7 17.5 7L16.2 13Q15.9 14.3 14.5 14.3H2.2Q0.8 14.3 1.1 13L2.2 6.9Q2.4 5.7 3.4 5.7Z" fill="none" stroke="#1a1a1a" stroke-width="1.3" stroke-linejoin="round"/></svg><div class="t" style="left:164.3px;top:833.0px;height:23px;line-height:23px;font-size:18px;color:#1a1a1a;">远程配置</div><div style="left:127px;top:856.8299999999999px;width:246.60000000000002px;height:1.2px;background:#dfe2e8"></div><div style="left:385px;top:77px;width:1776px;height:1851px;background:#fff"></div><div style="left:385px;top:77px;width:1776px;height:36px;background:#dde9fd"></div><div style="left:385px;top:110px;width:157px;height:3px;background:#1a6cf0"></div><svg style="left:400.6px;top:90.6px;" width="19" height="10" viewBox="0 0 19 10"><rect x="0.7" y="0.7" width="17.4" height="8.4" rx="0.8" fill="none" stroke="#333" stroke-width="1.3"/><path d="M4.2 3V6.8M6.6 3V6.8" stroke="#333" stroke-width="1"/><rect x="8.8" y="3.1" width="2.7" height="3.6" rx="1" fill="none" stroke="#333" stroke-width="0.9"/><rect x="12.6" y="3.1" width="2.7" height="3.6" rx="1" fill="none" stroke="#333" stroke-width="0.9"/></svg><div class="t" style="left:434px;top:84.6px;height:24px;line-height:24px;font-size:18.6px;color:#1a1a1a;letter-spacing:-1.1px;">PLC_1</div><svg style="left:519.8px;top:88.8px;" width="9" height="9" viewBox="0 0 9 9"><path d="M0.8 0.8L8.2 8.2M8.2 0.8L0.8 8.2" stroke="#222" stroke-width="1.3"/></svg><div style="left:385px;top:113px;width:1776px;height:38.5px;background:#e9f0fc;box-shadow:0 3px 9px rgba(60,70,90,0.28)"></div><svg style="left:406px;top:120.8px;" width="26" height="25" viewBox="0 0 26 25"><path d="M1 3.6Q1 0.3 4.3 0.3H14.4Q15.9 0.3 16.9 1.4L24.6 10.6Q25.8 12.2 24.4 13.8L15.6 23.2Q14 24.8 12.4 23.2L2 12.8Q1 11.8 1 10.4Z" fill="#0760dc"/><circle cx="9.6" cy="9.2" r="3.5" fill="#fff"/></svg><svg style="left:459px;top:121.5px;" width="23" height="25" viewBox="0 0 23 25"><path d="M4.7 13.4V5.7Q4.7 4.2 6.2 4.2Q7.7 4.2 7.7 5.7V12.4M9.0 13.4V2.2Q9.0 0.7 10.5 0.7Q12.0 0.7 12.0 2.2V12.4M13.2 13.4V2.7Q13.2 1.2 14.7 1.2Q16.2 1.2 16.2 2.7V12.4M16.9 13.4V6.5Q16.9 5 18.4 5Q19.9 5 19.9 6.5V12.4M4.7 14.6L2.4 11.6Q1.2 10.6 0.7 11.8Q0.4 12.8 1.3 14.2L5 20.2Q7.4 23.4 11.4 23.4Q17.4 23.4 18.6 17.6L19.9 6.6" fill="none" stroke="#0760dc" stroke-width="1.25" stroke-linecap="round" stroke-linejoin="round"/><path d="M7.8 6V11M12 3V10.4M16.2 4V11" stroke="#8db7f5" stroke-width="0.9"/></svg><svg style="left:509px;top:121px;" width="24" height="25" viewBox="0 0 24 25"><path d="M0.4 0.4H4.2V24.4H0.4Z" fill="#0760dc"/><rect x="7" y="9.6" width="3.4" height="14.4" fill="none" stroke="#2f48a8" stroke-width="1.1"/><path d="M12.6 9.4H22.6V24.4H18.8V11H16.4V24.4H12.6Z" fill="#0760dc"/><path d="M12.4 4.4H22.6V5.6H12.4Z" fill="#0760dc"/><path d="M10.8 5L14.6 2.6V7.4Z" fill="#0760dc"/></svg><div style="left:554px;top:124px;width:1.4px;height:17px;background:#c4cbd8"></div><svg style="left:577.4px;top:122.2px;" width="21.7" height="21.7" viewBox="0 0 23 23"><rect x="0.6" y="0.6" width="21.8" height="21.8" rx="2" fill="#0760dc" stroke="#2f48a8" stroke-width="1.1" stroke-dasharray="3.4 1.8"/><path d="M11.5 3.6V19.4M9 6.2L11.5 3.4L14 6.2M9 16.8L11.5 19.6L14 16.8" fill="none" stroke="#dbe7fb" stroke-width="1.05"/></svg><svg style="left:622.4px;top:122.2px;" width="21.7" height="21.7" viewBox="0 0 23 23"><rect x="0.6" y="0.6" width="21.8" height="21.8" rx="2" fill="#0760dc" stroke="#2f48a8" stroke-width="1.1" stroke-dasharray="3.4 1.8"/><path d="M3.6 11.5H9.4M13.6 11.5H19.4M6.2 9L3.4 11.5L6.2 14M16.8 9L19.6 11.5L16.8 14" fill="none" stroke="#dbe7fb" stroke-width="1.05"/></svg><svg style="left:667.4px;top:122.2px;" width="21.7" height="21.7" viewBox="0 0 23 23"><rect x="0.6" y="0.6" width="21.8" height="21.8" rx="2" fill="#0760dc" stroke="#2f48a8" stroke-width="1.1" stroke-dasharray="3.4 1.8"/><path d="M4 4L9.4 9.4M19 4L13.6 9.4M4 19L9.4 13.6M19 19L13.6 13.6M3.8 7.6V3.8H7.6M15.4 3.8H19.2V7.6M3.8 15.4V19.2H7.6M15.4 19.2H19.2V15.4" fill="none" stroke="#dbe7fb" stroke-width="1.05"/></svg><div style="left:2142px;top:757px;width:19px;height:54px;background:#eaf0fd;border-radius:4px 0 0 4px"></div><svg style="left:2145px;top:780px;" width="13" height="10" viewBox="0 0 13 10"><path d="M5.4 0.6L0.9 4.8L5.4 9M11.8 0.6L7.3 4.8L11.8 9" fill="none" stroke="#0760dc" stroke-width="1.3"/></svg><div style="left:385px;top:1457.6px;width:1776px;height:4.4px;background:linear-gradient(#dbe8fd,#84b2f8 30%,#84b2f8 60%,#b8d1fb)"></div><div style="left:385px;top:1461.5px;width:1776px;height:33px;background:#dde9fd"></div><div style="left:385px;top:1494.5px;width:1776px;height:433.5px;background:#f8fafd"></div><div style="left:485px;top:1458px;width:100px;height:36.5px;background:#fff"></div><div style="left:485px;top:1458px;width:100px;height:3px;background:#1a6cf0"></div><svg style="left:404px;top:1468px;" width="18" height="18" viewBox="0 0 18 18"><circle cx="9" cy="9" r="8" fill="none" stroke="#555" stroke-width="1.3"/><path d="M9.6 4.6V5.8M7.6 7.8H9.6V13.2M7.4 13.4H11.6" fill="none" stroke="#555" stroke-width="1.4"/></svg><div class="t" style="left:430.5px;top:1468.4px;height:23px;line-height:23px;font-size:17.6px;color:#555;">信息</div><svg style="left:505px;top:1468.6px;" width="18" height="17" viewBox="0 0 18 17"><rect x="0" y="0" width="18" height="17" rx="3.4" fill="#0760dc"/><path d="M2.4 4.4H15.6" stroke="#fff" stroke-width="1.5"/><rect x="3.6" y="7.6" width="4" height="4.4" rx="0.8" fill="none" stroke="#fff" stroke-width="1.3"/><path d="M9.8 8.4H14.6M9.8 11.4H14.6" stroke="#fff" stroke-width="1.4"/></svg><div class="t" style="left:531.3px;top:1468.4px;height:23px;line-height:23px;font-size:17.6px;color:#1a6cf0;">属性</div><svg style="left:604.4px;top:1468px;" width="19" height="18" viewBox="0 0 19 18"><path d="M15.4 12.6V1.6Q15.4 0.7 14.5 0.7H1.6Q0.7 0.7 0.7 1.6V13.2Q0.7 14 1.6 14H3.6" fill="none" stroke="#a0a0a0" stroke-width="1.2"/><rect x="3.8" y="3.6" width="14.4" height="13.6" rx="1" fill="#dde9fd" stroke="#8c8c8c" stroke-width="1.3"/><path d="M11 6.4V11.4M11 13V14.4" stroke="#8c8c8c" stroke-width="1.5" fill="none"/></svg><div class="t" style="left:632.6px;top:1468.4px;height:23px;line-height:23px;font-size:17.6px;color:#555;">IO冲突表</div><svg style="left:743px;top:1467.4px;" width="16" height="18" viewBox="0 0 16 18"><path d="M12.6 8V1.4Q12.6 0.6 11.8 0.6H1.4Q0.6 0.6 0.6 1.4V13.8Q0.6 14.6 1.4 14.6H6" fill="none" stroke="#999" stroke-width="1.2"/><path d="M3 4.2H10.4M3 7H10.4M3 9.8H7.4" stroke="#999" stroke-width="1.1" stroke-dasharray="2 1"/><path d="M9.4 10.4V16H15M12.6 13.6L15.2 16L12.6 18.2" fill="none" stroke="#777" stroke-width="1.3"/></svg><div class="t" style="left:768.8px;top:1468.4px;height:23px;line-height:23px;font-size:17.6px;color:#555;">硬件IO通道表</div><div class="t" style="left:489.6px;top:1617.9px;height:19px;line-height:19px;font-size:14.7px;color:#1a1a1a;font-weight:bold;">无可用<span style="padding-left:0.5em">“</span>属性<span style="padding-right:0.5em">”</span>。</div><div class="t" style="left:489.6px;top:1653.4px;height:19px;line-height:19px;font-size:14.7px;color:#1a1a1a;">目前未显示任何<span style="padding-left:0.5em">“</span>属性<span style="padding-right:0.5em">”</span>，可能未选择对象，或者所选对象没有可显示的属性。</div><svg style="left:1444px;top:720px;" width="20" height="29" viewBox="0 0 20 29"><path d="M1.4 1.3V24.7L6.5 20L10.1 27.7L14.8 25.5L11.4 19.5L18.9 19.2Z" fill="#fff" stroke="#14141c" stroke-width="1.1" stroke-linejoin="round"/></svg><div style="left:584.75px;top:392.2px;width:278.5px;height:34.7px;background:#eaecf1;border-radius:4.5px;transform:rotate(-45deg);transform-origin:50% 50%;"><div class="t" style="left:4px;top:0;height:34.7px;line-height:35px;font-size:22.3px;color:#111">CPU_1</div></div><div style="left:414.2px;top:543.2px;width:59.1px;height:48.6px;background:#e7e8ed"></div><svg style="left:414.2px;top:543.2px;" width="59.1" height="48.6" viewBox="0 0 59.1 48.6"><path d="M0.8 0.8H58.300000000000004M58.300000000000004 0.8V47.8M58.300000000000004 47.8H0.8M0.8 47.8V0.8" fill="none" stroke="#b1b9c9" stroke-width="1.6" stroke-dasharray="5 5.5" stroke-dashoffset="2.5"/></svg><div style="left:475px;top:543.2px;width:315.4px;height:48.6px;background:#bebfc3;border:1.6px solid #a9b7d2;border-right:none;"></div><div style="left:792px;top:543.2px;width:59px;height:48.6px;background:#e7e8ed"></div><svg style="left:792px;top:543.2px;" width="59" height="48.6" viewBox="0 0 59 48.6"><path d="M0.8 0.8H58.2M58.2 0.8V47.8M58.2 47.8H0.8M0.8 47.8V0.8" fill="none" stroke="#b1b9c9" stroke-width="1.6" stroke-dasharray="5 5.5" stroke-dashoffset="2.5"/></svg><div style="left:853.3px;top:543.2px;width:59.1px;height:48.6px;background:#e7e8ed"></div><svg style="left:853.3px;top:543.2px;" width="59.1" height="48.6" viewBox="0 0 59.1 48.6"><path d="M0.8 0.8H58.300000000000004M58.300000000000004 0.8V47.8M58.300000000000004 47.8H0.8M0.8 47.8V0.8" fill="none" stroke="#b1b9c9" stroke-width="1.6" stroke-dasharray="5 5.5" stroke-dashoffset="2.5"/></svg><div style="left:914.3px;top:543.2px;width:59.1px;height:48.6px;background:#a5b0cc"></div><svg style="left:914.3px;top:543.2px;" width="59.1" height="48.6" viewBox="0 0 59.1 48.6"><path d="M0.8 0.8H58.300000000000004M58.300000000000004 0.8V47.8M58.300000000000004 47.8H0.8M0.8 47.8V0.8" fill="none" stroke="#8794b6" stroke-width="1.6" stroke-dasharray="5 5.5" stroke-dashoffset="2.5"/></svg><div class="t" style="left:602.7px;top:551px;width:60px;text-align:center;font-size:24px;line-height:30px;color:#111">0</div><div class="t" style="left:791.5px;top:551px;width:60px;text-align:center;font-size:24px;line-height:30px;color:#111">1</div><div class="t" style="left:852.8px;top:551px;width:60px;text-align:center;font-size:24px;line-height:30px;color:#111">2</div><div class="t" style="left:914px;top:553px;width:60px;text-align:center;font-size:20px;line-height:30px;color:#111">...</div><div style="left:792px;top:593.5px;width:59px;height:601.1px;background:#dde1e9"></div><div style="left:853.3px;top:593.5px;width:59.1px;height:601.1px;background:#dde1e9"></div><div style="left:914.3px;top:593.5px;width:59.1px;height:601.1px;background:#a5b0cc"></div><div class="t" style="left:914px;top:808px;width:60px;text-align:center;font-size:24px;line-height:30px;color:#111">3</div><div class="t" style="left:914px;top:854px;width:60px;text-align:center;font-size:24px;line-height:30px;color:#111">-</div><div class="t" style="left:914px;top:901.5px;width:60px;text-align:center;font-size:24px;line-height:30px;color:#111">32</div><div style="left:792px;top:701.7px;width:4px;height:45px;background:linear-gradient(90deg,#c5c8cf,#d6d9e0 60%,#cdd0d7)"></div><div style="left:847.2px;top:701.7px;width:4px;height:45px;background:linear-gradient(90deg,#c5c8cf,#d6d9e0 60%,#cdd0d7)"></div><div style="left:853.3px;top:701.7px;width:4px;height:45px;background:linear-gradient(90deg,#c5c8cf,#d6d9e0 60%,#cdd0d7)"></div><div style="left:908.6px;top:701.7px;width:4px;height:45px;background:linear-gradient(90deg,#c5c8cf,#d6d9e0 60%,#cdd0d7)"></div><div style="left:792px;top:1043.5px;width:4px;height:45px;background:linear-gradient(90deg,#c5c8cf,#d6d9e0 60%,#cdd0d7)"></div><div style="left:847.2px;top:1043.5px;width:4px;height:45px;background:linear-gradient(90deg,#c5c8cf,#d6d9e0 60%,#cdd0d7)"></div><div style="left:853.3px;top:1043.5px;width:4px;height:45px;background:linear-gradient(90deg,#c5c8cf,#d6d9e0 60%,#cdd0d7)"></div><div style="left:908.6px;top:1043.5px;width:4px;height:45px;background:linear-gradient(90deg,#c5c8cf,#d6d9e0 60%,#cdd0d7)"></div><svg style="left:400px;top:530px" width="600" height="720" viewBox="400 530 600 720"><rect x="475.0" y="593.4" width="258.2" height="601.2" fill="#8a929f"/><rect x="480.0" y="598.3" width="253.2" height="596.3" fill="#596274"/><polygon points="480.0,602.1 483.5,598.5 537.3,598.5 537.3,604.2 506.3,635.3 480.0,635.3" fill="#343c52"/><polygon points="538.0,604.7 728.3,604.7 728.3,721.7 546.1,721.7 569.6,746.6 539.0,780.7 507.0,748.0 507.0,635.3" fill="#343c52"/><path d="M537.3 604.2L506.3 635.3" stroke="#aab2c0" stroke-width="0.7"/><polygon points="538.0,608.2 721.9,608.2 721.9,717.8 539.0,717.8 511.3,689.6 511.3,635.3" fill="#2e2e2e"/><rect x="561.8" y="633.1" width="114.1" height="59.4" fill="#232a3b" stroke="#39425c" stroke-width="0.6"/><polygon points="524.1,637.8 528.1,634.1 536.2,634.1 536.2,637.8" fill="#5a4838"/><text x="537.6" y="638.8" font-size="7.2" fill="#e8e8e8" font-family="Liberation Sans, sans-serif" text-rendering="geometricPrecision" textLength="12.8" lengthAdjust="spacingAndGlyphs">RUN</text><polygon points="524.1,664.9 528.1,661.2 536.2,661.2 536.2,664.9" fill="#5a4838"/><text x="537.6" y="665.9" font-size="7.2" fill="#e8e8e8" font-family="Liberation Sans, sans-serif" text-rendering="geometricPrecision" textLength="9.6" lengthAdjust="spacingAndGlyphs">INF</text><polygon points="524.1,691.9 528.1,688.2 536.2,688.2 536.2,691.9" fill="#5a4838"/><text x="537.6" y="692.9" font-size="7.2" fill="#e8e8e8" font-family="Liberation Sans, sans-serif" text-rendering="geometricPrecision" textLength="11.6" lengthAdjust="spacingAndGlyphs">ERR</text><polygon points="693.2,627.9 697.2,624.2 705.1,624.2 705.1,627.9" fill="#5a4838"/><text x="706.5" y="629.1" font-size="7" fill="#e8e8e8" font-family="Liberation Sans, sans-serif" text-rendering="geometricPrecision" textLength="11.7" lengthAdjust="spacingAndGlyphs">GE1</text><polygon points="693.2,652.6 697.2,648.9 705.1,648.9 705.1,652.6" fill="#5a4838"/><text x="706.5" y="653.8" font-size="7" fill="#e8e8e8" font-family="Liberation Sans, sans-serif" text-rendering="geometricPrecision" textLength="11.7" lengthAdjust="spacingAndGlyphs">GE2</text><polygon points="693.2,677.2 697.2,673.5 705.1,673.5 705.1,677.2" fill="#5a4838"/><text x="706.5" y="678.5" font-size="7" fill="#e8e8e8" font-family="Liberation Sans, sans-serif" text-rendering="geometricPrecision" textLength="11.7" lengthAdjust="spacingAndGlyphs">GE3</text><polygon points="693.2,701.9 697.2,698.2 705.1,698.2 705.1,701.9" fill="#5a4838"/><text x="706.5" y="703.2" font-size="7" fill="#e8e8e8" font-family="Liberation Sans, sans-serif" text-rendering="geometricPrecision" textLength="11.7" lengthAdjust="spacingAndGlyphs">GE4</text><polygon points="546.1,722.1 629.4,722.1 604.5,747.0 570.3,747.0" fill="#14e6ae"/><polygon points="569.6,747.0 604.5,747.0 549.7,802.1 549.7,791.4 539.0,780.7" fill="#20273a"/><polygon points="480.0,721.7 539.0,780.7 550.4,792.1 550.4,803.5 544.0,809.9 544.0,1194.6 480.2,1194.6 480.2,1194.6" fill="#242a36"/><polygon points="480.0,721.7 550.4,792.1 550.4,803.5 544.0,809.9 544.0,1194.6 480.0,1194.6" fill="#242a36"/><polygon points="480.2,1150.6 519.5,1189.1 544.2,1189.1 544.2,1194.6 475.0,1194.6 475.0,1189.9 480.2,1184.9" fill="#222a3d"/><polygon points="490.7,843.2 512.6,824.0 512.6,836.3 490.7,855.5" fill="#14e6ae"/><circle cx="494.0" cy="863.8" r="3" fill="none" stroke="#d5d8de" stroke-width="1"/><text x="502.5" y="866.0" font-size="5.9" fill="#9aa0ac" font-family="Liberation Sans, sans-serif" text-rendering="geometricPrecision" textLength="16.9" lengthAdjust="spacingAndGlyphs">+24V</text><circle cx="494.0" cy="871.3" r="3" fill="none" stroke="#d5d8de" stroke-width="1"/><text x="502.5" y="873.5" font-size="5.9" fill="#9aa0ac" font-family="Liberation Sans, sans-serif" text-rendering="geometricPrecision" textLength="8.5" lengthAdjust="spacingAndGlyphs">0V</text><circle cx="494.0" cy="878.8" r="3" fill="none" stroke="#d5d8de" stroke-width="1"/><text x="502.5" y="881.0" font-size="5.9" fill="#9aa0ac" font-family="Liberation Sans, sans-serif" text-rendering="geometricPrecision" textLength="22" lengthAdjust="spacingAndGlyphs">R485+</text><circle cx="494.0" cy="886.3" r="3" fill="none" stroke="#d5d8de" stroke-width="1"/><text x="502.5" y="888.5" font-size="5.9" fill="#9aa0ac" font-family="Liberation Sans, sans-serif" text-rendering="geometricPrecision" textLength="20.3" lengthAdjust="spacingAndGlyphs">R485-</text><circle cx="494.0" cy="893.8" r="3" fill="none" stroke="#d5d8de" stroke-width="1"/><text x="502.5" y="896.0" font-size="5.9" fill="#9aa0ac" font-family="Liberation Sans, sans-serif" text-rendering="geometricPrecision" textLength="20.5" lengthAdjust="spacingAndGlyphs">RGND</text><circle cx="494.0" cy="901.3" r="3" fill="none" stroke="#d5d8de" stroke-width="1"/><text x="502.5" y="903.5" font-size="5.9" fill="#9aa0ac" font-family="Liberation Sans, sans-serif" text-rendering="geometricPrecision" textLength="8.8" lengthAdjust="spacingAndGlyphs">PE</text><rect x="485.2" y="916.5" width="43.4" height="111.8" fill="#2a2a2c" stroke="#3b3b3e" stroke-width="0.6"/><rect x="494.2" y="922.0" width="15.7" height="14.8" fill="#2f2f32" stroke="#47474b" stroke-width="0.6"/><circle cx="500.8" cy="929.5" r="2.6" fill="#111"/><rect x="511.3" y="922.0" width="15.4" height="14.8" rx="3.4" fill="#18181a"/><rect x="494.2" y="939.3" width="15.7" height="14.8" fill="#2f2f32" stroke="#47474b" stroke-width="0.6"/><circle cx="500.8" cy="946.8" r="2.6" fill="#111"/><rect x="511.3" y="939.3" width="15.4" height="14.8" rx="3.4" fill="#18181a"/><rect x="494.2" y="956.6" width="15.7" height="14.8" fill="#2f2f32" stroke="#47474b" stroke-width="0.6"/><circle cx="500.8" cy="964.1" r="2.6" fill="#111"/><rect x="511.3" y="956.6" width="15.4" height="14.8" rx="3.4" fill="#18181a"/><rect x="494.2" y="974.2" width="15.7" height="14.8" fill="#2f2f32" stroke="#47474b" stroke-width="0.6"/><circle cx="500.8" cy="981.6" r="2.6" fill="#111"/><rect x="511.3" y="974.2" width="15.4" height="14.8" rx="3.4" fill="#18181a"/><rect x="494.2" y="991.8" width="15.7" height="14.8" fill="#2f2f32" stroke="#47474b" stroke-width="0.6"/><circle cx="500.8" cy="999.2" r="2.6" fill="#111"/><rect x="511.3" y="991.8" width="15.4" height="14.8" rx="3.4" fill="#18181a"/><rect x="494.2" y="1009.4" width="15.7" height="14.8" fill="#2f2f32" stroke="#47474b" stroke-width="0.6"/><circle cx="500.8" cy="1016.8" r="2.6" fill="#111"/><rect x="511.3" y="1009.4" width="15.4" height="14.8" rx="3.4" fill="#18181a"/><rect x="485.2" y="1051.2" width="43.4" height="43.1" fill="#2a2a2c" stroke="#3b3b3e" stroke-width="0.6"/><rect x="494.2" y="1056.1" width="15.7" height="14.8" fill="#2f2f32" stroke="#47474b" stroke-width="0.6"/><circle cx="500.8" cy="1063.5" r="2.6" fill="#111"/><rect x="511.3" y="1056.1" width="15.4" height="14.8" rx="3.4" fill="#18181a"/><rect x="494.2" y="1073.7" width="15.7" height="14.8" fill="#2f2f32" stroke="#47474b" stroke-width="0.6"/><circle cx="500.8" cy="1081.1" r="2.6" fill="#111"/><rect x="511.3" y="1073.7" width="15.4" height="14.8" rx="3.4" fill="#18181a"/><circle cx="494.0" cy="1115.4" r="3" fill="none" stroke="#d5d8de" stroke-width="1"/><text x="502.5" y="1117.6" font-size="5.9" fill="#9aa0ac" font-family="Liberation Sans, sans-serif" text-rendering="geometricPrecision" textLength="16.9" lengthAdjust="spacingAndGlyphs">+24V</text><circle cx="494.0" cy="1122.9" r="3" fill="none" stroke="#d5d8de" stroke-width="1"/><text x="502.5" y="1125.1" font-size="5.9" fill="#9aa0ac" font-family="Liberation Sans, sans-serif" text-rendering="geometricPrecision" textLength="8.5" lengthAdjust="spacingAndGlyphs">0V</text><polygon points="490.7,1132.7 512.6,1152.0 512.6,1164.3 490.7,1143.7" fill="#14e6ae"/><polygon points="632.3,722.4 730.2,722.4 730.2,1218.7 568.0,1218.7 544.6,1194.6 544.0,809.9" fill="#5f6a82"/><polygon points="634.4,727.3 725.5,727.3 725.5,1213.8 569.8,1213.8 549.6,1193.0 549.0,812.7" fill="#343c52"/><polygon points="725.5,727.3 730.2,722.4 730.2,1218.7 725.5,1213.8" fill="#2a3146"/><polygon points="569.8,1213.8 725.5,1213.8 730.2,1218.7 568.0,1218.7" fill="#2a3146"/><g transform="translate(615.2,784) scale(0.0475)"><polygon points="385,190 720,190 770,330 960,330 915,480 650,480 690,350 445,350" fill="#fff"/><polygon points="270,440 620,440 545,730 410,730 460,570 305,570" fill="#fff"/><polygon points="765,570 880,570 925,730 805,730" fill="#fff"/><polygon points="960,190 1200,190 1250,320 1020,320" fill="#fff"/><polygon points="1255,190 1480,190 1545,320 1295,320" fill="#fff"/><polygon points="1585,310 1705,310 1745,430 1620,430" fill="#fff"/><polygon points="1000,440 1250,440 1170,730 1040,730 1085,570 960,570" fill="#fff"/><polygon points="1450,440 1580,440 1495,730 1320,730 1300,605 1400,605" fill="#fff"/></g><rect x="583.9" y="1021.6" width="43.4" height="43.7" fill="#5c6577" stroke="#1fa51f" stroke-width="1.7"/><polygon points="597.8,1025.6 621.2,1025.6 621.2,1061.3 597.8,1061.3 597.8,1051.7 590.1,1047.6 590.1,1039.3 597.8,1035.2" fill="#3a3f52"/><rect x="607.4" y="1031.6" width="10.2" height="1.4" fill="#8a7b52"/><rect x="607.4" y="1034.8" width="10.2" height="1.4" fill="#8a7b52"/><rect x="607.4" y="1038.0" width="10.2" height="1.4" fill="#8a7b52"/><rect x="607.4" y="1041.2" width="10.2" height="1.4" fill="#8a7b52"/><rect x="607.4" y="1044.4" width="10.2" height="1.4" fill="#8a7b52"/><rect x="607.4" y="1047.6" width="10.2" height="1.4" fill="#8a7b52"/><rect x="607.4" y="1050.8" width="10.2" height="1.4" fill="#8a7b52"/><rect x="607.4" y="1054.0" width="10.2" height="1.4" fill="#8a7b52"/><rect x="648.5" y="1021.6" width="43.4" height="43.7" fill="#5c6577" stroke="#1fa51f" stroke-width="1.7"/><polygon points="654.9,1025.6 678.3,1025.6 678.3,1035.2 686.0,1039.3 686.0,1047.6 678.3,1051.7 678.3,1061.3 654.9,1061.3" fill="#3a3f52"/><rect x="658.5" y="1031.6" width="10.2" height="1.4" fill="#8a7b52"/><rect x="658.5" y="1034.8" width="10.2" height="1.4" fill="#8a7b52"/><rect x="658.5" y="1038.0" width="10.2" height="1.4" fill="#8a7b52"/><rect x="658.5" y="1041.2" width="10.2" height="1.4" fill="#8a7b52"/><rect x="658.5" y="1044.4" width="10.2" height="1.4" fill="#8a7b52"/><rect x="658.5" y="1047.6" width="10.2" height="1.4" fill="#8a7b52"/><rect x="658.5" y="1050.8" width="10.2" height="1.4" fill="#8a7b52"/><rect x="658.5" y="1054.0" width="10.2" height="1.4" fill="#8a7b52"/><rect x="583.9" y="1085.6" width="43.4" height="43.7" fill="#5c6577" stroke="#1fa51f" stroke-width="1.7"/><polygon points="597.8,1089.6 621.2,1089.6 621.2,1125.3 597.8,1125.3 597.8,1115.7 590.1,1111.6 590.1,1103.4 597.8,1099.2" fill="#3a3f52"/><rect x="607.4" y="1095.7" width="10.2" height="1.4" fill="#8a7b52"/><rect x="607.4" y="1098.8" width="10.2" height="1.4" fill="#8a7b52"/><rect x="607.4" y="1102.0" width="10.2" height="1.4" fill="#8a7b52"/><rect x="607.4" y="1105.2" width="10.2" height="1.4" fill="#8a7b52"/><rect x="607.4" y="1108.4" width="10.2" height="1.4" fill="#8a7b52"/><rect x="607.4" y="1111.6" width="10.2" height="1.4" fill="#8a7b52"/><rect x="607.4" y="1114.8" width="10.2" height="1.4" fill="#8a7b52"/><rect x="607.4" y="1118.0" width="10.2" height="1.4" fill="#8a7b52"/><rect x="648.5" y="1085.6" width="43.4" height="43.7" fill="#5c6577" stroke="#1fa51f" stroke-width="1.7"/><polygon points="654.9,1089.6 678.3,1089.6 678.3,1099.2 686.0,1103.4 686.0,1111.6 678.3,1115.7 678.3,1125.3 654.9,1125.3" fill="#3a3f52"/><rect x="658.5" y="1095.7" width="10.2" height="1.4" fill="#8a7b52"/><rect x="658.5" y="1098.8" width="10.2" height="1.4" fill="#8a7b52"/><rect x="658.5" y="1102.0" width="10.2" height="1.4" fill="#8a7b52"/><rect x="658.5" y="1105.2" width="10.2" height="1.4" fill="#8a7b52"/><rect x="658.5" y="1108.4" width="10.2" height="1.4" fill="#8a7b52"/><rect x="658.5" y="1111.6" width="10.2" height="1.4" fill="#8a7b52"/><rect x="658.5" y="1114.8" width="10.2" height="1.4" fill="#8a7b52"/><rect x="658.5" y="1118.0" width="10.2" height="1.4" fill="#8a7b52"/><text x="559.9" y="1048.1" font-size="11.2" fill="#cfd3db" font-family="Liberation Sans, sans-serif" text-rendering="geometricPrecision" textLength="19.2" lengthAdjust="spacingAndGlyphs">GE1</text><text x="696.2" y="1048.1" font-size="11.2" fill="#cfd3db" font-family="Liberation Sans, sans-serif" text-rendering="geometricPrecision" textLength="19.8" lengthAdjust="spacingAndGlyphs">GE2</text><text x="567.6" y="1110.8" font-size="11.2" fill="#cfd3db" font-family="Liberation Sans, sans-serif" text-rendering="geometricPrecision" textLength="11.6" lengthAdjust="spacingAndGlyphs">X3</text><text x="697.5" y="1110.8" font-size="11.2" fill="#cfd3db" font-family="Liberation Sans, sans-serif" text-rendering="geometricPrecision" textLength="13.4" lengthAdjust="spacingAndGlyphs">EC</text><text x="558.5" y="1166.5" font-size="17.5" fill="#fff" font-family="Liberation Sans, sans-serif" text-rendering="geometricPrecision" font-weight="bold" font-style="italic" letter-spacing="-0.6">T3</text><polygon points="717.3,1171.8 722.3,1167.1 722.3,1211.0 678.0,1211.0 683.0,1206.1 717.3,1206.1" fill="#14e6ae"/><rect x="733.2" y="593.4" width="56.4" height="601.2" fill="#e3e5e9"/><rect x="788.0" y="593.4" width="1.6" height="601.2" fill="#9b9da3"/><rect x="740.1" y="607.7" width="42.3" height="42.3" fill="#141416" stroke="#9ea2a8" stroke-width="1"/><polygon points="740.7,608.3 781.9,608.3 775.0,615.2 740.7,615.2" fill="#14e6ae"/><text x="742.9" y="673.7" font-size="7" fill="#8a8d94" font-family="Liberation Sans, sans-serif" text-rendering="geometricPrecision" textLength="16.1" lengthAdjust="spacingAndGlyphs">PWR</text><rect x="764.0" y="668.2" width="10.2" height="5.5" fill="#5a4838"/><text x="745.1" y="691.3" font-size="7" fill="#8a8d94" font-family="Liberation Sans, sans-serif" text-rendering="geometricPrecision" textLength="13.8" lengthAdjust="spacingAndGlyphs">ERR</text><rect x="764.0" y="685.8" width="10.2" height="5.5" fill="#5a4838"/><rect x="762.1" y="703.1" width="10.2" height="4.9" fill="#5a4838"/><text x="779.9" y="707.7" font-size="6.6" fill="#5f7299" font-family="Liberation Sans, sans-serif" text-rendering="geometricPrecision">1</text><rect x="744.2" y="711.3" width="8.8" height="13.7" rx="2.4" fill="#1c1c1e"/><rect x="761.6" y="711.3" width="15.2" height="14.9" fill="#3ed3a0" stroke="#1d8f60" stroke-width="0.7"/><rect x="767.0" y="711.3" width="4.5" height="14.9" fill="#27a878"/><rect x="761.6" y="716.6" width="15.2" height="4.5" fill="#27a878" opacity="0.85"/><circle cx="770.3" cy="718.7" r="3" fill="#161a1a"/><rect x="762.1" y="730.2" width="10.2" height="4.9" fill="#5a4838"/><text x="779.9" y="734.9" font-size="6.6" fill="#5f7299" font-family="Liberation Sans, sans-serif" text-rendering="geometricPrecision">2</text><rect x="744.2" y="738.4" width="8.8" height="13.7" rx="2.4" fill="#1c1c1e"/><rect x="761.6" y="738.4" width="15.2" height="14.9" fill="#3ed3a0" stroke="#1d8f60" stroke-width="0.7"/><rect x="767.0" y="738.4" width="4.5" height="14.9" fill="#27a878"/><rect x="761.6" y="743.7" width="15.2" height="4.5" fill="#27a878" opacity="0.85"/><circle cx="770.3" cy="745.8" r="3" fill="#161a1a"/><rect x="762.1" y="757.3" width="10.2" height="4.9" fill="#5a4838"/><text x="779.9" y="762.0" font-size="6.6" fill="#5f7299" font-family="Liberation Sans, sans-serif" text-rendering="geometricPrecision">3</text><rect x="744.2" y="765.6" width="8.8" height="13.7" rx="2.4" fill="#1c1c1e"/><rect x="761.6" y="765.5" width="15.2" height="14.9" fill="#3ed3a0" stroke="#1d8f60" stroke-width="0.7"/><rect x="767.0" y="765.5" width="4.5" height="14.9" fill="#27a878"/><rect x="761.6" y="770.9" width="15.2" height="4.5" fill="#27a878" opacity="0.85"/><circle cx="770.3" cy="772.9" r="3" fill="#161a1a"/><rect x="762.1" y="784.4" width="10.2" height="4.9" fill="#5a4838"/><text x="779.9" y="789.1" font-size="6.6" fill="#5f7299" font-family="Liberation Sans, sans-serif" text-rendering="geometricPrecision">4</text><rect x="744.2" y="792.7" width="8.8" height="13.7" rx="2.4" fill="#1c1c1e"/><rect x="761.6" y="792.6" width="15.2" height="14.9" fill="#3ed3a0" stroke="#1d8f60" stroke-width="0.7"/><rect x="767.0" y="792.6" width="4.5" height="14.9" fill="#27a878"/><rect x="761.6" y="798.0" width="15.2" height="4.5" fill="#27a878" opacity="0.85"/><circle cx="770.3" cy="800.1" r="3" fill="#161a1a"/><rect x="762.1" y="811.6" width="10.2" height="4.9" fill="#5a4838"/><text x="779.9" y="816.2" font-size="6.6" fill="#5f7299" font-family="Liberation Sans, sans-serif" text-rendering="geometricPrecision">5</text><rect x="744.2" y="819.8" width="8.8" height="13.7" rx="2.4" fill="#1c1c1e"/><rect x="761.6" y="819.8" width="15.2" height="14.9" fill="#3ed3a0" stroke="#1d8f60" stroke-width="0.7"/><rect x="767.0" y="819.8" width="4.5" height="14.9" fill="#27a878"/><rect x="761.6" y="825.1" width="15.2" height="4.5" fill="#27a878" opacity="0.85"/><circle cx="770.3" cy="827.2" r="3" fill="#161a1a"/><rect x="762.1" y="838.7" width="10.2" height="4.9" fill="#5a4838"/><text x="779.9" y="843.4" font-size="6.6" fill="#5f7299" font-family="Liberation Sans, sans-serif" text-rendering="geometricPrecision">6</text><rect x="744.2" y="846.9" width="8.8" height="13.7" rx="2.4" fill="#1c1c1e"/><rect x="761.6" y="846.9" width="15.2" height="14.9" fill="#3ed3a0" stroke="#1d8f60" stroke-width="0.7"/><rect x="767.0" y="846.9" width="4.5" height="14.9" fill="#27a878"/><rect x="761.6" y="852.2" width="15.2" height="4.5" fill="#27a878" opacity="0.85"/><circle cx="770.3" cy="854.3" r="3" fill="#161a1a"/><rect x="762.1" y="865.8" width="10.2" height="4.9" fill="#5a4838"/><text x="779.9" y="870.5" font-size="6.6" fill="#5f7299" font-family="Liberation Sans, sans-serif" text-rendering="geometricPrecision">7</text><rect x="744.2" y="874.1" width="8.8" height="13.7" rx="2.4" fill="#1c1c1e"/><rect x="761.6" y="874.0" width="15.2" height="14.9" fill="#3ed3a0" stroke="#1d8f60" stroke-width="0.7"/><rect x="767.0" y="874.0" width="4.5" height="14.9" fill="#27a878"/><rect x="761.6" y="879.4" width="15.2" height="4.5" fill="#27a878" opacity="0.85"/><circle cx="770.3" cy="881.4" r="3" fill="#161a1a"/><rect x="762.1" y="892.9" width="10.2" height="4.9" fill="#5a4838"/><text x="779.9" y="897.6" font-size="6.6" fill="#5f7299" font-family="Liberation Sans, sans-serif" text-rendering="geometricPrecision">8</text><rect x="744.2" y="901.2" width="8.8" height="13.7" rx="2.4" fill="#1c1c1e"/><rect x="761.6" y="901.1" width="15.2" height="14.9" fill="#3ed3a0" stroke="#1d8f60" stroke-width="0.7"/><rect x="767.0" y="901.1" width="4.5" height="14.9" fill="#27a878"/><rect x="761.6" y="906.5" width="15.2" height="4.5" fill="#27a878" opacity="0.85"/><circle cx="770.3" cy="908.6" r="3" fill="#161a1a"/><rect x="762.1" y="920.1" width="10.2" height="4.9" fill="#5a4838"/><text x="779.9" y="924.7" font-size="6.6" fill="#5f7299" font-family="Liberation Sans, sans-serif" text-rendering="geometricPrecision">9</text><rect x="744.2" y="928.3" width="8.8" height="13.7" rx="2.4" fill="#1c1c1e"/><rect x="761.6" y="928.3" width="15.2" height="14.9" fill="#3ed3a0" stroke="#1d8f60" stroke-width="0.7"/><rect x="767.0" y="928.3" width="4.5" height="14.9" fill="#27a878"/><rect x="761.6" y="933.6" width="15.2" height="4.5" fill="#27a878" opacity="0.85"/><circle cx="770.3" cy="935.7" r="3" fill="#161a1a"/><rect x="762.1" y="947.2" width="10.2" height="4.9" fill="#5a4838"/><text x="778.0" y="951.9" font-size="6.6" fill="#5f7299" font-family="Liberation Sans, sans-serif" text-rendering="geometricPrecision">10</text><rect x="744.2" y="955.4" width="8.8" height="13.7" rx="2.4" fill="#1c1c1e"/><rect x="761.6" y="955.4" width="15.2" height="14.9" fill="#3ed3a0" stroke="#1d8f60" stroke-width="0.7"/><rect x="767.0" y="955.4" width="4.5" height="14.9" fill="#27a878"/><rect x="761.6" y="960.7" width="15.2" height="4.5" fill="#27a878" opacity="0.85"/><circle cx="770.3" cy="962.8" r="3" fill="#161a1a"/><rect x="762.1" y="974.3" width="10.2" height="4.9" fill="#5a4838"/><text x="778.0" y="979.0" font-size="6.6" fill="#5f7299" font-family="Liberation Sans, sans-serif" text-rendering="geometricPrecision">11</text><rect x="744.2" y="982.6" width="8.8" height="13.7" rx="2.4" fill="#1c1c1e"/><rect x="761.6" y="982.5" width="15.2" height="14.9" fill="#3ed3a0" stroke="#1d8f60" stroke-width="0.7"/><rect x="767.0" y="982.5" width="4.5" height="14.9" fill="#27a878"/><rect x="761.6" y="987.9" width="15.2" height="4.5" fill="#27a878" opacity="0.85"/><circle cx="770.3" cy="989.9" r="3" fill="#161a1a"/><rect x="762.1" y="1001.4" width="10.2" height="4.9" fill="#5a4838"/><text x="778.0" y="1006.1" font-size="6.6" fill="#5f7299" font-family="Liberation Sans, sans-serif" text-rendering="geometricPrecision">12</text><rect x="744.2" y="1009.7" width="8.8" height="13.7" rx="2.4" fill="#1c1c1e"/><rect x="761.6" y="1009.6" width="15.2" height="14.9" fill="#3ed3a0" stroke="#1d8f60" stroke-width="0.7"/><rect x="767.0" y="1009.6" width="4.5" height="14.9" fill="#27a878"/><rect x="761.6" y="1015.0" width="15.2" height="4.5" fill="#27a878" opacity="0.85"/><circle cx="770.3" cy="1017.1" r="3" fill="#161a1a"/><rect x="762.1" y="1028.6" width="10.2" height="4.9" fill="#5a4838"/><text x="778.0" y="1033.2" font-size="6.6" fill="#5f7299" font-family="Liberation Sans, sans-serif" text-rendering="geometricPrecision">13</text><rect x="744.2" y="1036.8" width="8.8" height="13.7" rx="2.4" fill="#1c1c1e"/><rect x="761.6" y="1036.8" width="15.2" height="14.9" fill="#3ed3a0" stroke="#1d8f60" stroke-width="0.7"/><rect x="767.0" y="1036.8" width="4.5" height="14.9" fill="#27a878"/><rect x="761.6" y="1042.1" width="15.2" height="4.5" fill="#27a878" opacity="0.85"/><circle cx="770.3" cy="1044.2" r="3" fill="#161a1a"/><rect x="762.1" y="1055.7" width="10.2" height="4.9" fill="#5a4838"/><text x="778.0" y="1060.4" font-size="6.6" fill="#5f7299" font-family="Liberation Sans, sans-serif" text-rendering="geometricPrecision">14</text><rect x="744.2" y="1063.9" width="8.8" height="13.7" rx="2.4" fill="#1c1c1e"/><rect x="761.6" y="1063.9" width="15.2" height="14.9" fill="#3ed3a0" stroke="#1d8f60" stroke-width="0.7"/><rect x="767.0" y="1063.9" width="4.5" height="14.9" fill="#27a878"/><rect x="761.6" y="1069.2" width="15.2" height="4.5" fill="#27a878" opacity="0.85"/><circle cx="770.3" cy="1071.3" r="3" fill="#161a1a"/><rect x="762.1" y="1082.8" width="10.2" height="4.9" fill="#5a4838"/><text x="778.0" y="1087.5" font-size="6.6" fill="#5f7299" font-family="Liberation Sans, sans-serif" text-rendering="geometricPrecision">15</text><rect x="744.2" y="1091.0" width="8.8" height="13.7" rx="2.4" fill="#1c1c1e"/><rect x="761.6" y="1091.0" width="15.2" height="14.9" fill="#3ed3a0" stroke="#1d8f60" stroke-width="0.7"/><rect x="767.0" y="1091.0" width="4.5" height="14.9" fill="#27a878"/><rect x="761.6" y="1096.3" width="15.2" height="4.5" fill="#27a878" opacity="0.85"/><circle cx="770.3" cy="1098.4" r="3" fill="#161a1a"/><rect x="762.1" y="1109.9" width="10.2" height="4.9" fill="#5a4838"/><text x="778.0" y="1114.6" font-size="6.6" fill="#5f7299" font-family="Liberation Sans, sans-serif" text-rendering="geometricPrecision">16</text><rect x="744.2" y="1118.2" width="8.8" height="13.7" rx="2.4" fill="#1c1c1e"/><rect x="761.6" y="1118.1" width="15.2" height="14.9" fill="#3ed3a0" stroke="#1d8f60" stroke-width="0.7"/><rect x="767.0" y="1118.1" width="4.5" height="14.9" fill="#27a878"/><rect x="761.6" y="1123.5" width="15.2" height="4.5" fill="#27a878" opacity="0.85"/><circle cx="770.3" cy="1125.6" r="3" fill="#161a1a"/><rect x="735.7" y="1179.5" width="51.1" height="15.1" fill="#141416"/></svg><div style="left:2160.2px;top:77px;width:3px;height:1851px;background:#a8c7fa"></div><div style="left:2163.5px;top:77px;width:328.5px;height:1851px;background:#f8fafd"></div><div style="left:2163.5px;top:77px;width:328.5px;height:37px;background:#dde9fd"></div><div class="t" style="left:2177px;top:86.0px;height:23px;line-height:23px;font-size:18px;color:#000;">硬件目录</div><div style="left:2163.5px;top:113.4px;width:328.5px;height:2px;background:#fff"></div><div style="left:2162.8px;top:115px;width:328.8px;height:32.6px;background:#d6e4fd;border-radius:2px 7px 7px 2px"></div><svg style="left:2172.4px;top:127px;" width="15" height="9" viewBox="0 0 15 9"><path d="M0.7 0.8L7.4 7.6L14.1 0.8" fill="none" stroke="#2a6cf0" stroke-width="1.4"/></svg><div class="t" style="left:2198px;top:122.4px;height:21px;line-height:21px;font-size:16px;color:#2a6cf0;">目录</div><svg style="left:2177px;top:169px;" width="18" height="18" viewBox="0 0 18 18"><rect x="0" y="0" width="18" height="18" rx="3.4" fill="#2b7cf7"/><path d="M3.4 8.8L7.4 13L14.6 4.8" fill="none" stroke="#fff" stroke-width="2"/></svg><div class="t" style="left:2206.8px;top:169.0px;height:21px;line-height:21px;font-size:16.4px;color:#111;">过滤</div><div style="left:2266px;top:166px;width:1.6px;height:24px;background:#d5d8de"></div><div style="left:2288.7px;top:159.5px;width:120.5px;height:37px;background:#fff;border:1px solid #e2e5ea;border-radius:6px"></div><div class="t" style="left:2303.7px;top:167.9px;height:22px;line-height:22px;font-size:16.6px;color:#8c8c8c;">搜索</div><svg style="left:2427px;top:168px;" width="19" height="18" viewBox="0 0 19 18"><path d="M1 1.2H18" stroke="#2a6cf0" stroke-width="2.1" stroke-linecap="round"/><path d="M1 9H5.2M1 16.6H5.2" stroke="#2a6cf0" stroke-width="2.1" stroke-linecap="round"/><path d="M12.6 4.6V16.4M7.6 11.4L12.6 16.6L17.6 11.4" fill="none" stroke="#2a6cf0" stroke-width="1.9"/></svg><svg style="left:2463px;top:168px;" width="19" height="18" viewBox="0 0 19 18"><path d="M1 1.2H18" stroke="#2a6cf0" stroke-width="2.1" stroke-linecap="round"/><path d="M1 9H5.2M1 16.6H5.2" stroke="#2a6cf0" stroke-width="2.1" stroke-linecap="round"/><path d="M12.6 17V5.2M7.6 10.2L12.6 5L17.6 10.2" fill="none" stroke="#2a6cf0" stroke-width="1.9"/></svg><div style="left:2169px;top:209.3px;width:309px;height:37.5px;background:#cfe0fc;border-radius:6px"></div><svg style="left:2180.6px;top:221.6px;" width="8" height="13" viewBox="0 0 8 13"><path d="M0.8 0.8L6.6 6.5L0.8 12.2" fill="none" stroke="#8a8f99" stroke-width="1.3"/></svg><svg style="left:2204px;top:219px;" width="16" height="19" viewBox="0 0 16 19"><rect x="0.7" y="0.7" width="14.6" height="17.2" rx="1.6" fill="none" stroke="#a9aaae" stroke-width="1.3"/><path d="M5.6 1V17.8" stroke="#a9aaae" stroke-width="1.1"/><path d="M8 3.4V7.6" stroke="#a9aaae" stroke-width="0.9"/><rect x="9.8" y="3.4" width="3" height="4.2" fill="none" stroke="#a9aaae" stroke-width="0.9"/><path d="M7.6 10.4H13.4M7.6 12.6H13.4M7.6 14.8H13.4" stroke="#a9aaae" stroke-width="0.9" stroke-dasharray="1.4 0.8"/><circle cx="3.2" cy="14.8" r="0.9" fill="#a9aaae"/></svg><div class="t" style="left:2229px;top:218.3px;height:22px;line-height:22px;font-size:17px;color:#111;letter-spacing:-0.9px;">PLC</div><div style="left:2163px;top:1303px;width:326px;height:8px;background:#c9cbcc;border-radius:4px 4px 0 0"></div><div style="left:2163.5px;top:1310.6px;width:328.5px;height:3px;background:#a8c7fa"></div><div style="left:2162.8px;top:1315px;width:328.8px;height:33px;background:#d8e6fd;border:1px solid #c3d5f7;border-left:none;border-radius:2px 7px 7px 2px"></div><svg style="left:2172.4px;top:1327.4px;" width="15" height="9" viewBox="0 0 15 9"><path d="M0.7 0.8L7.4 7.6L14.1 0.8" fill="none" stroke="#2a6cf0" stroke-width="1.4"/></svg><div class="t" style="left:2197px;top:1322.0px;height:21px;line-height:21px;font-size:16px;color:#2a6cf0;">信息</div><svg style="left:2211px;top:1366px;" width="240" height="240" viewBox="0 0 240 240"><rect x="0" y="0" width="240" height="240" rx="5" fill="#e1e3e8"/><rect x="40" y="26" width="160" height="187.6" rx="9" fill="#bcbdc1"/><rect x="102" y="40" width="86" height="160" rx="11" fill="#e1e3e8"/><rect x="111.6" y="48.5" width="12.2" height="60.5" rx="6.1" fill="#bcbdc1"/><rect x="141.8" y="49" width="33" height="59.8" fill="#bcbdc1"/><circle cx="72" cy="189.5" r="11.3" fill="#e1e3e8"/><circle cx="117.8" cy="125.4" r="6" fill="#bcbdc1"/><circle cx="135.8" cy="125.4" r="6" fill="#bcbdc1"/><circle cx="153.7" cy="125.4" r="6" fill="#bcbdc1"/><circle cx="171.6" cy="125.4" r="6" fill="#bcbdc1"/><circle cx="117.8" cy="152" r="6" fill="#bcbdc1"/><circle cx="135.8" cy="152" r="6" fill="#bcbdc1"/><circle cx="153.7" cy="152" r="6" fill="#bcbdc1"/><circle cx="171.6" cy="152" r="6" fill="#bcbdc1"/><circle cx="117.8" cy="179.5" r="6" fill="#bcbdc1"/><circle cx="135.8" cy="179.5" r="6" fill="#bcbdc1"/><circle cx="153.7" cy="179.5" r="6" fill="#bcbdc1"/><circle cx="171.6" cy="179.5" r="6" fill="#bcbdc1"/></svg><div class="t" style="left:2180.3px;top:1634.9px;height:23px;line-height:23px;font-size:17.6px;color:#111;">供应商</div><div style="left:2278.8px;top:1645px;width:5.6px;height:2px;background:#222"></div><div class="t" style="left:2180.3px;top:1674.1px;height:23px;line-height:23px;font-size:17.6px;color:#111;">类别</div><div style="left:2278.8px;top:1684px;width:5.6px;height:2px;background:#222"></div><div class="t" style="left:2180.3px;top:1713.1px;height:23px;line-height:23px;font-size:17.6px;color:#111;">产品型号</div><div style="left:2278.8px;top:1723px;width:5.6px;height:2px;background:#222"></div><div class="t" style="left:2180.3px;top:1751.9px;height:23px;line-height:23px;font-size:17.6px;color:#111;">产品类型</div><div style="left:2278.8px;top:1762px;width:5.6px;height:2px;background:#222"></div><div class="t" style="left:2180.3px;top:1790.7px;height:23px;line-height:23px;font-size:17.6px;color:#111;">订货号</div><div style="left:2278.8px;top:1801px;width:5.6px;height:2px;background:#222"></div><div class="t" style="left:2180.3px;top:1829.7px;height:23px;line-height:23px;font-size:17.6px;color:#111;">固件版本</div><div class="t" style="left:2180.3px;top:1867.3px;height:23px;line-height:23px;font-size:17.6px;color:#111;">描述</div><div style="left:2270.5px;top:1878.6px;width:5px;height:1px;background:#444"></div><div style="left:2270px;top:1822px;width:213px;height:35.6px;background:#eeeff3;border-radius:5px"></div><svg style="left:2458.5px;top:1835.8px;" width="18" height="11" viewBox="0 0 18 11"><path d="M1.4 1.4L8.8 8.6L16.2 1.4" fill="none" stroke="#c6c6c8" stroke-width="2.6"/></svg><div style="left:2163px;top:1921px;width:303px;height:8px;background:#c9cbcc;border-radius:4px 4px 0 0"></div><div style="left:0px;top:1928px;width:2544px;height:36px;background:#007acc"></div><div style="left:2428px;top:1928px;width:116px;height:36px;background:#8a4dff"></div><svg style="left:24px;top:1935.5px;" width="22" height="21" viewBox="0 0 22 21"><circle cx="11" cy="10.4" r="9.6" fill="#0a72b8" stroke="#28b428" stroke-width="1.3"/><path d="M1.6 11.4H20.4A9.4 9.4 0 0 1 1.6 11.4Z" fill="#1fae1f"/></svg><div class="t" style="left:74px;top:1936.4px;height:23px;line-height:23px;font-size:17.6px;color:#fff;font-family:'Liberation Mono',monospace;font-weight:bold;">ClientID-af943117-df8c-4436-b830-84e46012f009</div><svg style="left:2291px;top:1939px;" width="19" height="16" viewBox="0 0 19 16"><rect x="0.8" y="0.8" width="17.4" height="14.4" rx="1" fill="none" stroke="#fff" stroke-width="1.6"/><path d="M1 4.4H18" stroke="#fff" stroke-width="1.6"/></svg><svg style="left:2337px;top:1932px;" width="26" height="24" viewBox="0 0 26 24"><path d="M11.2 6.6V0.6H24.6V17H19.4" fill="none" stroke="#fff" stroke-width="1.2"/><path d="M15 2.6V7M16.8 2.6V7" stroke="#fff" stroke-width="0.9"/><rect x="19.4" y="2.6" width="2.4" height="4.4" fill="none" stroke="#fff" stroke-width="0.9"/><path d="M18.4 10.6H22.8M18.4 12.6H22.8M18.4 14.6H22.8" stroke="#fff" stroke-width="1" stroke-dasharray="1.6 0.8"/><rect x="0.7" y="9.6" width="15" height="10" rx="1.6" fill="#007acc" stroke="#fff" stroke-width="1.3"/><path d="M5 14.4L7.4 16.8L11.6 12.4" fill="none" stroke="#fff" stroke-width="1.4"/><path d="M8.2 19.8V22.8M5.6 23H10.8M1 22.6H15.6" stroke="#fff" stroke-width="1.2"/></svg><div class="t" style="left:2378.5px;top:1935.9px;height:22px;line-height:22px;font-size:17px;color:#fff;font-weight:bold;">×</div><div class="t" style="left:2404px;top:1934.4px;height:23px;line-height:23px;font-size:17.5px;color:#fff;font-weight:bold;">0</div><div style="left:2337px;top:1958px;width:77px;height:1px;background:#fff"></div><div class="t" style="left:2440px;top:1934.4px;height:23px;line-height:23px;font-size:18px;color:#fff;">仿真</div><div class="t" style="left:2492.5px;top:1936.4px;height:22px;line-height:22px;font-size:17px;color:#fff;font-weight:bold;">×</div><div class="t" style="left:2519px;top:1934.8px;height:23px;line-height:23px;font-size:17.5px;color:#fff;font-weight:bold;">0</div><div style="left:2440px;top:1958px;width:89px;height:1px;background:#fff"></div></div>
</body></html>
